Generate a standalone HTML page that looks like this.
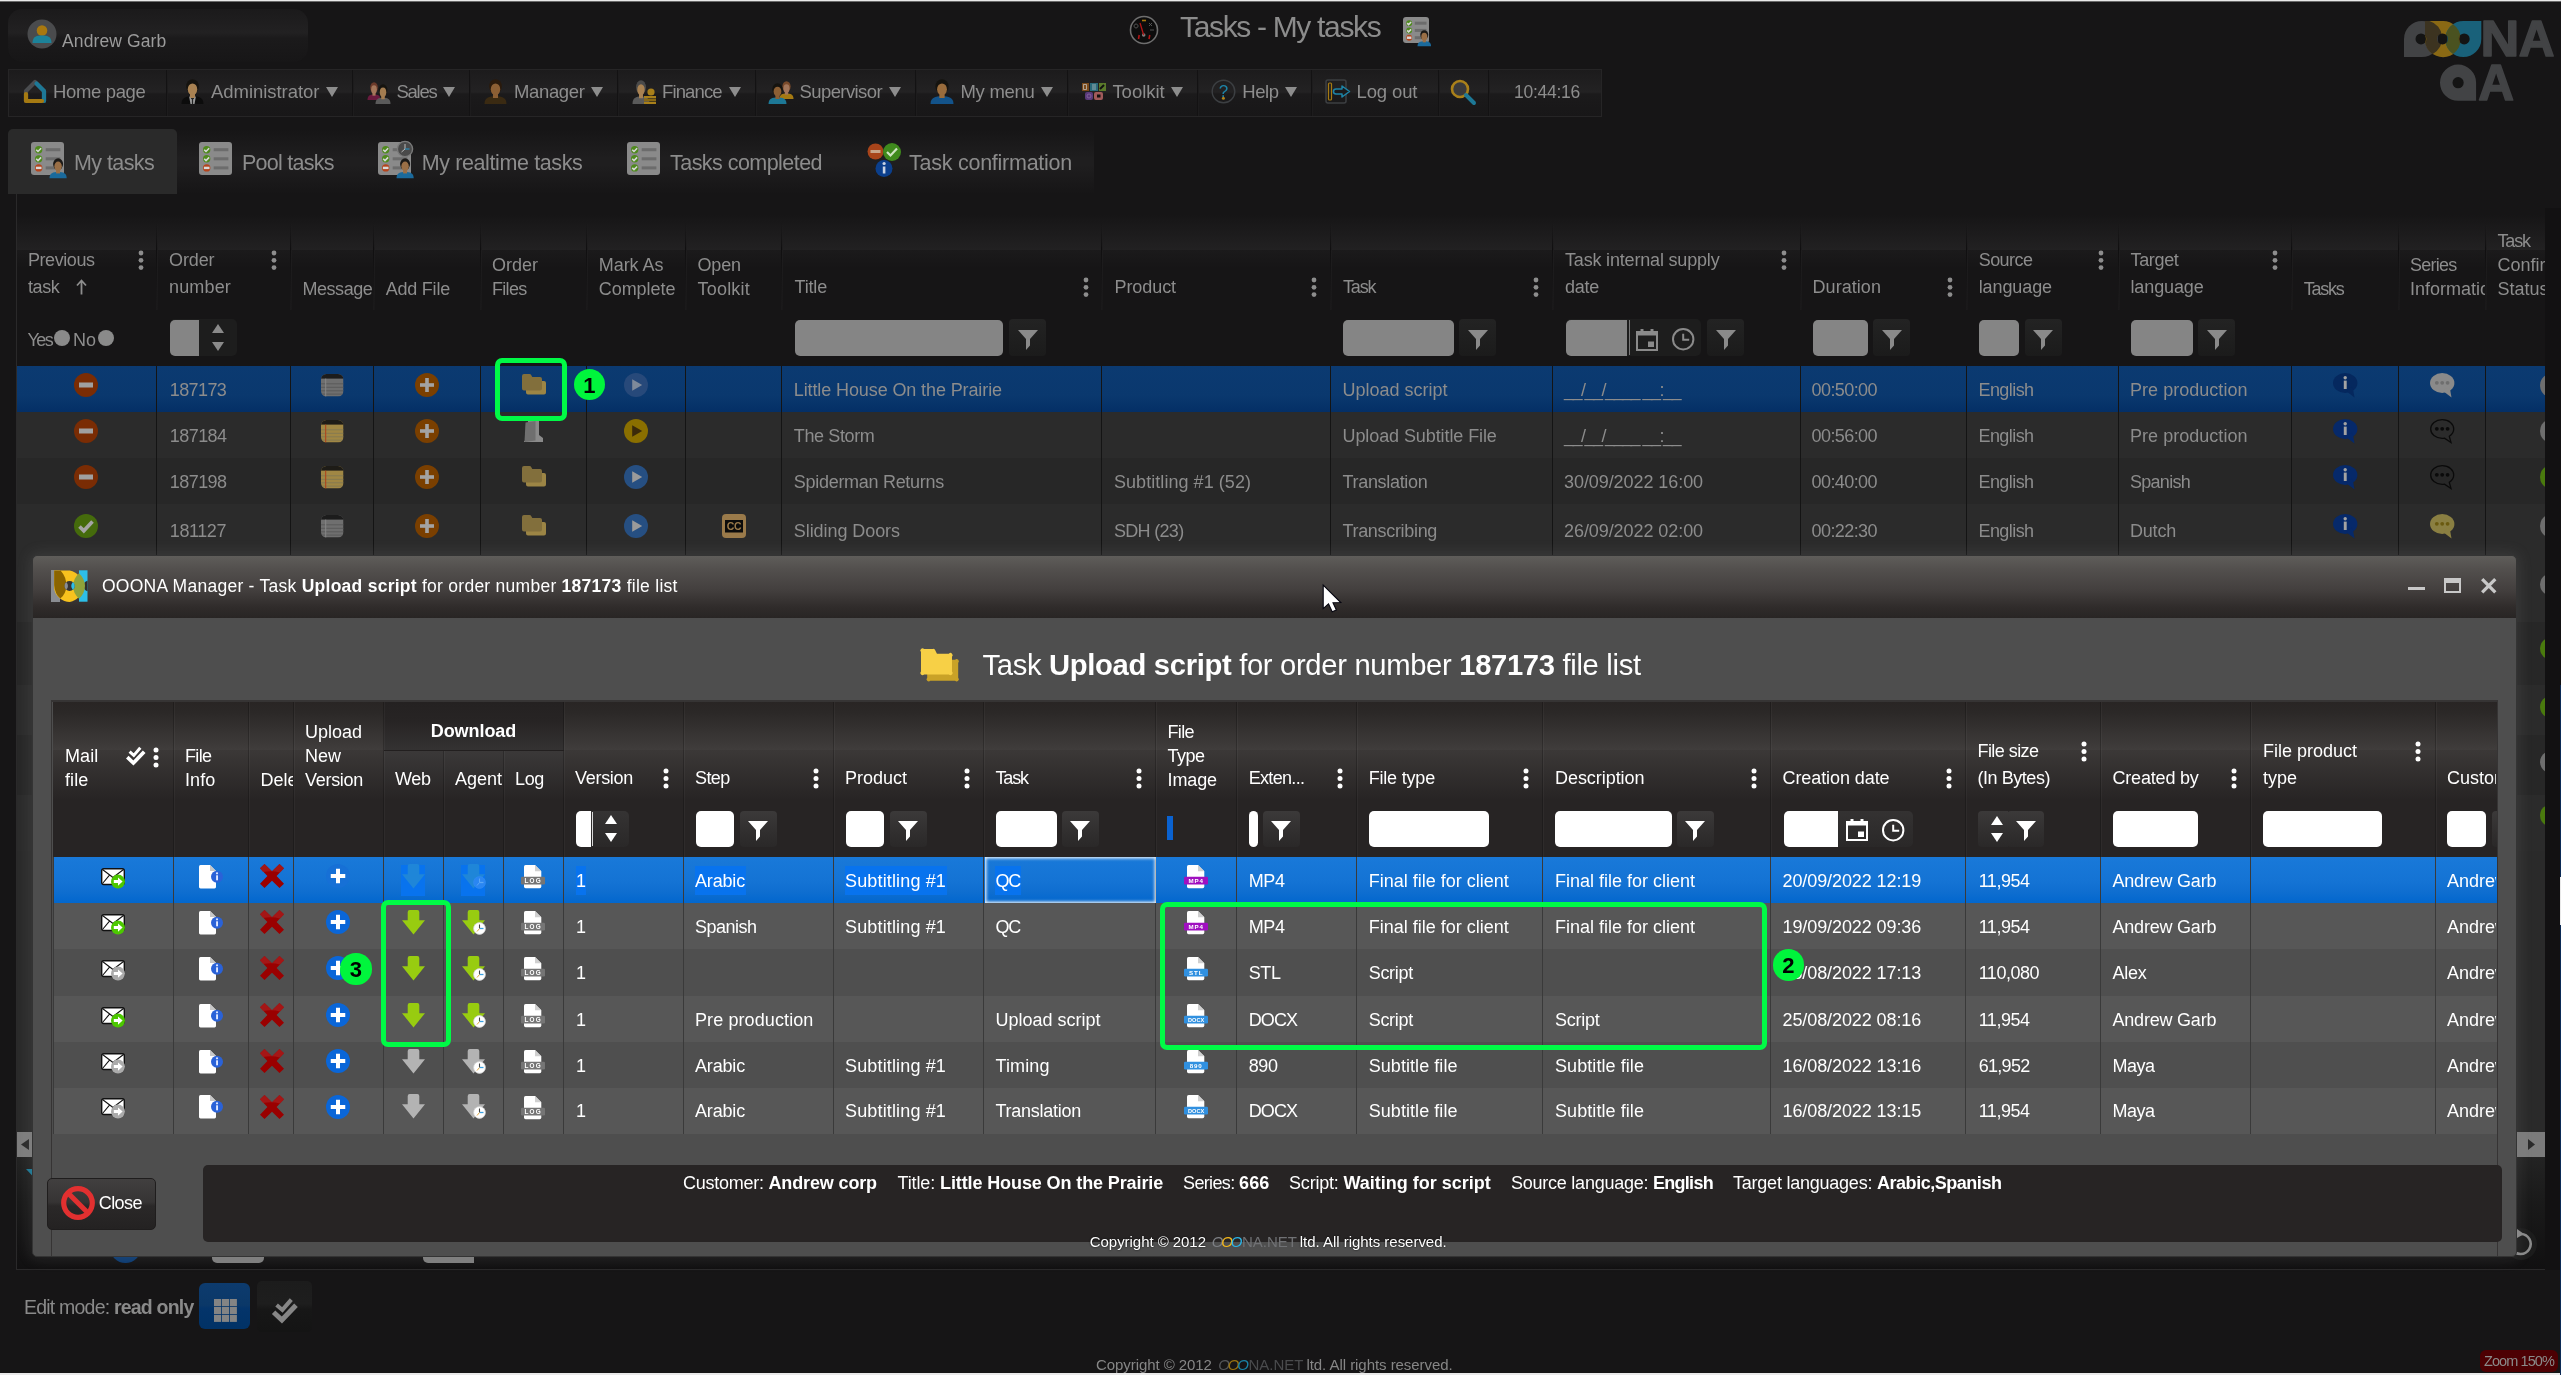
<!DOCTYPE html>
<html><head><meta charset="utf-8"><title>Tasks - My tasks</title><style>
html,body{margin:0;padding:0}
body{width:2561px;height:1375px;background:#161516;overflow:hidden;position:relative;font-family:'Liberation Sans',sans-serif}
body div,body svg{position:absolute;box-sizing:border-box}
body span{white-space:pre}
.t{white-space:pre}
svg{overflow:visible}
</style></head><body>
<div id="root" style="left:0;top:0;width:2561px;height:1375px;will-change:transform">
<div style="left:0px;top:0px;width:2561px;height:1px;background:#e9e9e9"></div>
<div style="left:0px;top:1px;width:2561px;height:1px;background:#6a6a6a"></div>
<div style="left:8px;top:9px;width:300px;height:53px;border-radius:14px;background:linear-gradient(#1b1a1b 0%,#222122 45%,#1b1a1b 55%,#171617 100%)"></div>
<svg style="left:27px;top:19px;" width="30" height="30" viewBox="0 0 30 30"><circle cx="15" cy="15" r="14.5" fill="#4a4b4d"/><circle cx="15" cy="11.5" r="5.3" fill="#a8780f"/><path d="M5.5 24 C5.5 17 10 16.5 15 16.5 C20 16.5 24.5 17 24.5 24 Z" fill="#1c8299"/></svg>
<div class="t" style="left:62px;top:29px;font-size:17.5px;line-height:24px;color:#9b9b9b;letter-spacing:0.11px;">Andrew Garb</div>
<svg style="left:1129px;top:15px;" width="30" height="30" viewBox="0 0 30 30"><circle cx="15" cy="15" r="13.5" fill="#0c0c0c" stroke="#6e6e6e" stroke-width="1.6"/><circle cx="14.7" cy="20" r="1.8" fill="#7d7d7d"/><path d="M14.7 20 L11 8" stroke="#b01616" stroke-width="1.3"/><path d="M9.5 24 l0.7 -4 M20 24 l0.8 -4" stroke="#b01616" stroke-width="1.6"/><path d="M7 9 a2 2 0 1 0 0.1 0 M20 8 l3 3 m0 -3 l-3 3 M21 15 h4" stroke="#5a5a5a" stroke-width="0.9" fill="none"/><path d="M13 5.5 h4" stroke="#a8780f" stroke-width="1.6"/></svg>
<div class="t" style="left:1180px;top:7px;font-size:30px;line-height:40px;color:#8c8c8c;letter-spacing:-1.33px;">Tasks - My tasks</div>
<svg style="left:1403px;top:17px;" width="28" height="28" viewBox="0 0 28 28"><rect x="0" y="0" width="26" height="26" rx="3" fill="#8a8a8a"/><circle cx="6.16" cy="6.16" r="2.94" fill="#4f8a1d"/><path d="M4.2 6.16 l1.4000000000000001 1.4000000000000001 l2.52 -2.52" stroke="#d8d8d8" stroke-width="1.6" fill="none"/><rect x="11.76" y="4.66" width="11.76" height="3" fill="#6c6c6c"/><circle cx="6.16" cy="13.44" r="2.94" fill="#4f8a1d"/><path d="M4.2 13.44 l1.4000000000000001 1.4000000000000001 l2.52 -2.52" stroke="#d8d8d8" stroke-width="1.6" fill="none"/><rect x="11.76" y="11.94" width="11.76" height="3" fill="#6c6c6c"/><circle cx="6.16" cy="20.72" r="2.94" fill="#b5441c"/><rect x="3.9200000000000004" y="19.52" width="4.48" height="2.4" fill="#d8d8d8"/><rect x="11.76" y="19.22" width="11.76" height="3" fill="#6c6c6c"/></svg>
<svg style="left:1417px;top:29.6px;" width="14.56" height="16.24" viewBox="0 0 14.56 16.24"><path d="M0.5 16.24 C0.5 12.017599999999998 3.2032000000000003 11.205599999999999 7.28 11.205599999999999 C11.356800000000002 11.205599999999999 14.06 12.017599999999998 14.06 16.24 Z" fill="#1a6a9c"/><rect x="5.678400000000001" y="8.444799999999999" width="3.2032000000000003" height="3.8975999999999993" fill="#9a6f46"/><ellipse cx="7.28" cy="4.871999999999999" rx="4.0040000000000004" ry="4.709599999999999" fill="#1c1a18"/><ellipse cx="7.28" cy="6.6583999999999985" rx="2.9848" ry="3.8163999999999993" fill="#9a6f46"/></svg>
<svg style="left:2402px;top:19px;" width="156" height="84" viewBox="0 0 156 84"><path d="M20 2 A18 18 0 0 1 20 38 H2 V20 A18 18 0 0 1 20 2 Z" fill="#424345"/><path d="M23 2 H40.8 A18.1 18.1 0 1 1 23 20.1 Z" fill="#8a6914"/><path d="M23 2 H27.5 A18 18 0 0 1 30.5 35.2 A18.1 18.1 0 0 1 23 20.1 Z" fill="#3c3320"/><path d="M61.3 2 H79.3 V20 A18 18 0 1 1 61.3 2 Z" fill="#19617a"/><path d="M51 5.2 A18 18 0 0 1 51 34.9 A18 18 0 0 1 51 5.2 Z" fill="#4a5220"/><circle cx="19" cy="19.9" r="5.5" fill="#141414"/><circle cx="40.5" cy="19.9" r="5.5" fill="#141414"/><circle cx="62.2" cy="19.9" r="5.5" fill="#141414"/><path d="M22.8 15.9 A5.5 5.5 0 0 1 22.8 23.9 A8 8 0 0 0 22.8 15.9Z" fill="#8a6914"/><path d="M36.6 16 A5.5 5.5 0 0 0 36.6 23.8 A8 8 0 0 1 36.6 16Z" fill="#55565a"/><path d="M44.4 16 A5.5 5.5 0 0 1 44.4 23.8 A8 8 0 0 0 44.4 16Z" fill="#19617a"/><path d="M58.3 16 A5.5 5.5 0 0 0 58.3 23.8 A8 8 0 0 1 58.3 16Z" fill="#8a6914"/><text transform="translate(82.20,37.4) scale(1.0686,1)" x="-3.36" y="0" font-family="Liberation Sans, sans-serif" font-weight="700" font-size="50.3" fill="#424345" stroke="#424345" stroke-width="1.6" stroke-linejoin="round">N</text><text transform="translate(118.00,37.4) scale(0.9838,1)" x="-1.25" y="0" font-family="Liberation Sans, sans-serif" font-weight="700" font-size="50.3" fill="#424345" stroke="#424345" stroke-width="1.6" stroke-linejoin="round">A</text><path d="M56.1 45.6 A18 18 0 0 1 74.1 63.7 V81.8 H56.1 A18.1 18.1 0 0 1 56.1 45.6 Z" fill="#424345"/><circle cx="56.1" cy="63.7" r="5.6" fill="#141414"/><text transform="translate(77.40,81) scale(0.9838,1)" x="-1.25" y="0" font-family="Liberation Sans, sans-serif" font-weight="700" font-size="50.3" fill="#424345" stroke="#424345" stroke-width="1.6" stroke-linejoin="round">A</text></svg>
<div style="left:8px;top:69px;width:1594px;height:48px;background:linear-gradient(#1c1b1c 0%,#232223 48%,#1b1a1b 52%,#181718 100%);border:1px solid #262526;box-sizing:border-box"></div>
<div style="left:166px;top:70px;width:2px;height:46px;background:#1d1c1d;border-left:1px solid #131213"></div>
<div style="left:352px;top:70px;width:2px;height:46px;background:#1d1c1d;border-left:1px solid #131213"></div>
<div style="left:469px;top:70px;width:2px;height:46px;background:#1d1c1d;border-left:1px solid #131213"></div>
<div style="left:617px;top:70px;width:2px;height:46px;background:#1d1c1d;border-left:1px solid #131213"></div>
<div style="left:755px;top:70px;width:2px;height:46px;background:#1d1c1d;border-left:1px solid #131213"></div>
<div style="left:915px;top:70px;width:2px;height:46px;background:#1d1c1d;border-left:1px solid #131213"></div>
<div style="left:1067px;top:70px;width:2px;height:46px;background:#1d1c1d;border-left:1px solid #131213"></div>
<div style="left:1197px;top:70px;width:2px;height:46px;background:#1d1c1d;border-left:1px solid #131213"></div>
<div style="left:1311px;top:70px;width:2px;height:46px;background:#1d1c1d;border-left:1px solid #131213"></div>
<div style="left:1438px;top:70px;width:2px;height:46px;background:#1d1c1d;border-left:1px solid #131213"></div>
<div style="left:1488px;top:70px;width:2px;height:46px;background:#1d1c1d;border-left:1px solid #131213"></div>
<svg style="left:22px;top:79px;" width="26" height="25" viewBox="0 0 26 25"><path d="M4 22 V12 L13 3 L22 12 V22" fill="none" stroke="#4a4c4f" stroke-width="4.2" stroke-linejoin="round" stroke-linecap="round"/><path d="M14.5 4.5 L22 12 V22" fill="none" stroke="#1d7896" stroke-width="4.2" stroke-linejoin="round" stroke-linecap="round"/><path d="M4 15 V22 H20" fill="none" stroke="#a57a12" stroke-width="4.2" stroke-linejoin="round" stroke-linecap="round"/></svg>
<div class="t" style="left:53px;top:79px;font-size:18.5px;line-height:26px;color:#8d8d8d;letter-spacing:-0.35px;">Home page</div>
<svg style="left:181px;top:79px;" width="23" height="25" viewBox="0 0 23 25"><path d="M0.5 25 C0.5 18.5 5.06 17.25 11.5 17.25 C17.94 17.25 22.5 18.5 22.5 25 Z" fill="#0c0c0c"/><rect x="8.97" y="13.0" width="5.06" height="6.0" fill="#a98252"/><ellipse cx="11.5" cy="7.5" rx="6.325" ry="7.249999999999999" fill="#15130f"/><ellipse cx="11.5" cy="10.25" rx="4.715" ry="5.875" fill="#a98252"/></svg>
<svg style="left:188px;top:96px;" width="9" height="8" viewBox="0 0 9 8"><path d="M1 0 L4.5 4 L8 0 L6.5 8 H2.5 Z" fill="#9a9a9a"/><path d="M4.5 2 V8" stroke="#222" stroke-width="1.2"/></svg>
<div class="t" style="left:211px;top:79px;font-size:18.5px;line-height:26px;color:#8d8d8d;letter-spacing:-0.04px;">Administrator</div>
<svg style="left:325.5px;top:86.5px;" width="12" height="10" viewBox="0 0 12 10"><path d="M0 0 H12 L6 10 Z" fill="#8d8d8d"/></svg>
<svg style="left:367px;top:82px;" width="14" height="18" viewBox="0 0 14 18"><path d="M0.5 18 C0.5 13.32 3.08 12.419999999999998 7.0 12.419999999999998 C10.92 12.419999999999998 13.5 13.32 13.5 18 Z" fill="#6a1a3e"/><rect x="5.46" y="9.36" width="3.08" height="4.32" fill="#a4765a"/><ellipse cx="7.0" cy="5.3999999999999995" rx="3.8500000000000005" ry="5.22" fill="#6b3a2a"/><ellipse cx="7.0" cy="7.38" rx="2.8699999999999997" ry="4.2299999999999995" fill="#a4765a"/></svg>
<svg style="left:375px;top:84px;" width="16" height="20" viewBox="0 0 16 20"><path d="M0.5 20 C0.5 14.8 3.52 13.799999999999999 8.0 13.799999999999999 C12.48 13.799999999999999 15.5 14.8 15.5 20 Z" fill="#5a5a5a"/><rect x="6.24" y="10.4" width="3.52" height="4.8" fill="#a37c50"/><ellipse cx="8.0" cy="6.0" rx="4.4" ry="5.8" fill="#15130f"/><ellipse cx="8.0" cy="8.2" rx="3.28" ry="4.699999999999999" fill="#a37c50"/></svg>
<div class="t" style="left:396.5px;top:79px;font-size:18.5px;line-height:26px;color:#8d8d8d;letter-spacing:-1.26px;">Sales</div>
<svg style="left:443px;top:86.5px;" width="12" height="10" viewBox="0 0 12 10"><path d="M0 0 H12 L6 10 Z" fill="#8d8d8d"/></svg>
<svg style="left:484px;top:79px;" width="23" height="25" viewBox="0 0 23 25"><path d="M0.5 25 C0.5 18.5 5.06 17.25 11.5 17.25 C17.94 17.25 22.5 18.5 22.5 25 Z" fill="#3a2a12"/><rect x="8.97" y="13.0" width="5.06" height="6.0" fill="#8c5f34"/><ellipse cx="11.5" cy="7.5" rx="6.325" ry="7.249999999999999" fill="#2a1a0c"/><ellipse cx="11.5" cy="10.25" rx="4.715" ry="5.875" fill="#8c5f34"/></svg>
<div class="t" style="left:514px;top:79px;font-size:18.5px;line-height:26px;color:#8d8d8d;letter-spacing:-0.36px;">Manager</div>
<svg style="left:591px;top:86.5px;" width="12" height="10" viewBox="0 0 12 10"><path d="M0 0 H12 L6 10 Z" fill="#8d8d8d"/></svg>
<svg style="left:632px;top:80px;" width="18" height="24" viewBox="0 0 18 24"><path d="M0.5 24 C0.5 17.759999999999998 3.96 16.56 9.0 16.56 C14.040000000000001 16.56 17.5 17.759999999999998 17.5 24 Z" fill="#5a5a5a"/><rect x="7.0200000000000005" y="12.48" width="3.96" height="5.76" fill="#a98252"/><ellipse cx="9.0" cy="7.199999999999999" rx="4.95" ry="6.959999999999999" fill="#4a4a4a"/><ellipse cx="9.0" cy="9.84" rx="3.69" ry="5.64" fill="#a98252"/></svg>
<svg style="left:643px;top:88px;" width="13" height="16" viewBox="0 0 13 16"><circle cx="8" cy="4" r="3.6" fill="#a9801a"/><rect x="1" y="8" width="12" height="2.4" fill="#a9801a"/><rect x="1" y="11" width="12" height="2.4" fill="#8a6914"/><rect x="1" y="14" width="12" height="2" fill="#a9801a"/></svg>
<div class="t" style="left:662px;top:79px;font-size:18.5px;line-height:26px;color:#8d8d8d;letter-spacing:-0.86px;">Finance</div>
<svg style="left:728.5px;top:86.5px;" width="12" height="10" viewBox="0 0 12 10"><path d="M0 0 H12 L6 10 Z" fill="#8d8d8d"/></svg>
<svg style="left:779px;top:81px;" width="15" height="18" viewBox="0 0 15 18"><path d="M0.5 18 C0.5 13.32 3.3 12.419999999999998 7.5 12.419999999999998 C11.700000000000001 12.419999999999998 14.5 13.32 14.5 18 Z" fill="#a57a12"/><rect x="5.8500000000000005" y="9.36" width="3.3" height="4.32" fill="#a4765a"/><ellipse cx="7.5" cy="5.3999999999999995" rx="4.125" ry="5.22" fill="#7a4a2a"/><ellipse cx="7.5" cy="7.38" rx="3.0749999999999997" ry="4.2299999999999995" fill="#a4765a"/></svg>
<svg style="left:768px;top:83px;" width="19" height="21" viewBox="0 0 19 21"><path d="M0.5 21 C0.5 15.54 4.18 14.489999999999998 9.5 14.489999999999998 C14.82 14.489999999999998 18.5 15.54 18.5 21 Z" fill="#1d7896"/><rect x="7.41" y="10.92" width="4.18" height="5.04" fill="#8c5f34"/><ellipse cx="9.5" cy="6.3" rx="5.2250000000000005" ry="6.09" fill="#15130f"/><ellipse cx="9.5" cy="8.61" rx="3.8949999999999996" ry="4.935" fill="#8c5f34"/></svg>
<div class="t" style="left:799.5px;top:79px;font-size:18.5px;line-height:26px;color:#8d8d8d;letter-spacing:-0.59px;">Supervisor</div>
<svg style="left:888.7px;top:86.5px;" width="12" height="10" viewBox="0 0 12 10"><path d="M0 0 H12 L6 10 Z" fill="#8d8d8d"/></svg>
<svg style="left:930px;top:79px;" width="24" height="25" viewBox="0 0 24 25"><path d="M0.5 25 C0.5 18.5 5.28 17.25 12.0 17.25 C18.72 17.25 23.5 18.5 23.5 25 Z" fill="#13538a"/><rect x="9.36" y="13.0" width="5.28" height="6.0" fill="#9a6c3c"/><ellipse cx="12.0" cy="7.5" rx="6.6000000000000005" ry="7.249999999999999" fill="#15130f"/><ellipse cx="12.0" cy="10.25" rx="4.92" ry="5.875" fill="#9a6c3c"/></svg>
<div class="t" style="left:960.5px;top:79px;font-size:18.5px;line-height:26px;color:#8d8d8d;letter-spacing:-0.30px;">My menu</div>
<svg style="left:1041px;top:86.5px;" width="12" height="10" viewBox="0 0 12 10"><path d="M0 0 H12 L6 10 Z" fill="#8d8d8d"/></svg>
<svg style="left:1082px;top:83px;" width="24" height="17" viewBox="0 0 24 17"><rect x="0" y="0" width="7" height="8" fill="#7a4a1a"/><rect x="8" y="0" width="8" height="8" fill="#2a6a7a"/><rect x="17" y="0" width="7" height="8" fill="#5a7a2a"/><rect x="3" y="9" width="8" height="8" rx="2" fill="#5a3a7a"/><rect x="12" y="9" width="9" height="8" rx="2" fill="#a05a5a"/><path d="M18 6 l4 -4" stroke="#111" stroke-width="2"/><rect x="15" y="11.5" width="3.5" height="3" fill="#111"/><circle cx="7" cy="13" r="2" fill="none" stroke="#8a6aa0" stroke-width="0.8"/><path d="M1.5 1.5 h3 v5 h-3z M10 2 h4 M10 4 h4 M10 6h4" stroke="#c9c9c9" stroke-width="0.7" fill="none"/></svg>
<div class="t" style="left:1112.4px;top:79px;font-size:18.5px;line-height:26px;color:#8d8d8d;letter-spacing:-0.02px;">Toolkit</div>
<svg style="left:1171px;top:86.5px;" width="12" height="10" viewBox="0 0 12 10"><path d="M0 0 H12 L6 10 Z" fill="#8d8d8d"/></svg>
<svg style="left:1211px;top:79px;" width="25" height="25" viewBox="0 0 25 25"><circle cx="12.5" cy="12.5" r="11.3" fill="none" stroke="#3c3f42" stroke-width="1.4"/><text x="12.5" y="18" text-anchor="middle" font-family="Liberation Sans, sans-serif" font-size="17" fill="#1d84a8">?</text><circle cx="12.4" cy="19.3" r="1.5" fill="#b0841a"/></svg>
<div class="t" style="left:1242.3px;top:79px;font-size:18.5px;line-height:26px;color:#8d8d8d;letter-spacing:-0.47px;">Help</div>
<svg style="left:1285px;top:86.5px;" width="12" height="10" viewBox="0 0 12 10"><path d="M0 0 H12 L6 10 Z" fill="#8d8d8d"/></svg>
<svg style="left:1325px;top:79px;" width="27" height="26" viewBox="0 0 27 26"><rect x="1" y="1" width="20" height="23" rx="2" fill="none" stroke="#3c3f42" stroke-width="1.5"/><rect x="3.5" y="4" width="3" height="17" rx="1" fill="none" stroke="#a57a12" stroke-width="1.2"/><path d="M11 10 H17 V7 L24.5 12.5 L17 18 V15 H11 A2.5 2.5 0 0 1 11 10 Z" fill="#1b1a1b" stroke="#1d84a8" stroke-width="1.5" stroke-linejoin="round"/></svg>
<div class="t" style="left:1356.5px;top:79px;font-size:18.5px;line-height:26px;color:#8d8d8d;letter-spacing:-0.12px;">Log out</div>
<svg style="left:1449px;top:78px;" width="29" height="28" viewBox="0 0 29 28"><circle cx="11" cy="11" r="8" fill="#3a3a3c" stroke="#a9801a" stroke-width="2.6"/><path d="M17 17 L25 25" stroke="#1d7896" stroke-width="4" stroke-linecap="round"/></svg>
<div class="t" style="left:1514px;top:80px;font-size:17.5px;line-height:24px;color:#8d8d8d;letter-spacing:-0.27px;">10:44:16</div>
<div style="left:8px;top:129px;width:1086px;height:65px;background:linear-gradient(#161516 0%,#1f1e1f 45%,#1f1e1f 55%,#161516 100%)"></div>
<div style="left:8px;top:129px;width:169px;height:65px;background:#2a2a2a;border-radius:5px 5px 0 0"></div>
<svg style="left:31px;top:142px;" width="35" height="35" viewBox="0 0 35 35"><rect x="0" y="0" width="33" height="33" rx="3" fill="#8a8a8a"/><circle cx="7.7" cy="7.7" r="3.675" fill="#4f8a1d"/><path d="M5.25 7.7 l1.75 1.75 l3.15 -3.15" stroke="#d8d8d8" stroke-width="1.6" fill="none"/><rect x="14.7" y="6.2" width="14.7" height="3" fill="#6c6c6c"/><circle cx="7.7" cy="16.8" r="3.675" fill="#4f8a1d"/><path d="M5.25 16.8 l1.75 1.75 l3.15 -3.15" stroke="#d8d8d8" stroke-width="1.6" fill="none"/><rect x="14.7" y="15.3" width="14.7" height="3" fill="#6c6c6c"/><circle cx="7.7" cy="25.9" r="3.675" fill="#b5441c"/><rect x="4.9" y="24.7" width="5.6000000000000005" height="2.4" fill="#d8d8d8"/><rect x="14.7" y="24.4" width="14.7" height="3" fill="#6c6c6c"/></svg>
<svg style="left:48.5px;top:157.75px;" width="18.2" height="20.3" viewBox="0 0 18.2 20.3"><path d="M0.5 20.299999999999997 C0.5 15.021999999999998 4.004 14.006999999999996 9.1 14.006999999999996 C14.196 14.006999999999996 17.7 15.021999999999998 17.7 20.299999999999997 Z" fill="#1a6a9c"/><rect x="7.098" y="10.556" width="4.004" height="4.871999999999999" fill="#9a6f46"/><ellipse cx="9.1" cy="6.089999999999999" rx="5.005" ry="5.886999999999999" fill="#1c1a18"/><ellipse cx="9.1" cy="8.322999999999999" rx="3.7309999999999994" ry="4.770499999999999" fill="#9a6f46"/></svg>
<div class="t" style="left:74px;top:148px;font-size:21.5px;line-height:30px;color:#8c8c8c;letter-spacing:-0.58px;">My tasks</div>
<svg style="left:199px;top:142px;" width="35" height="35" viewBox="0 0 35 35"><rect x="0" y="0" width="33" height="33" rx="3" fill="#8a8a8a"/><circle cx="7.7" cy="7.7" r="3.675" fill="#4f8a1d"/><path d="M5.25 7.7 l1.75 1.75 l3.15 -3.15" stroke="#d8d8d8" stroke-width="1.6" fill="none"/><rect x="14.7" y="6.2" width="14.7" height="3" fill="#6c6c6c"/><circle cx="7.7" cy="16.8" r="3.675" fill="#4f8a1d"/><path d="M5.25 16.8 l1.75 1.75 l3.15 -3.15" stroke="#d8d8d8" stroke-width="1.6" fill="none"/><rect x="14.7" y="15.3" width="14.7" height="3" fill="#6c6c6c"/><circle cx="7.7" cy="25.9" r="3.675" fill="#b5441c"/><rect x="4.9" y="24.7" width="5.6000000000000005" height="2.4" fill="#d8d8d8"/><rect x="14.7" y="24.4" width="14.7" height="3" fill="#6c6c6c"/></svg>
<div class="t" style="left:242px;top:148px;font-size:21.5px;line-height:30px;color:#8c8c8c;letter-spacing:-0.74px;">Pool tasks</div>
<svg style="left:378px;top:142px;" width="35" height="35" viewBox="0 0 35 35"><rect x="0" y="0" width="33" height="33" rx="3" fill="#8a8a8a"/><circle cx="7.7" cy="7.7" r="3.675" fill="#4f8a1d"/><path d="M5.25 7.7 l1.75 1.75 l3.15 -3.15" stroke="#d8d8d8" stroke-width="1.6" fill="none"/><rect x="14.7" y="6.2" width="14.7" height="3" fill="#6c6c6c"/><circle cx="7.7" cy="16.8" r="3.675" fill="#4f8a1d"/><path d="M5.25 16.8 l1.75 1.75 l3.15 -3.15" stroke="#d8d8d8" stroke-width="1.6" fill="none"/><rect x="14.7" y="15.3" width="14.7" height="3" fill="#6c6c6c"/><circle cx="7.7" cy="25.9" r="3.675" fill="#b5441c"/><rect x="4.9" y="24.7" width="5.6000000000000005" height="2.4" fill="#d8d8d8"/><rect x="14.7" y="24.4" width="14.7" height="3" fill="#6c6c6c"/></svg>
<svg style="left:395.5px;top:157.75px;" width="18.2" height="20.3" viewBox="0 0 18.2 20.3"><path d="M0.5 20.299999999999997 C0.5 15.021999999999998 4.004 14.006999999999996 9.1 14.006999999999996 C14.196 14.006999999999996 17.7 15.021999999999998 17.7 20.299999999999997 Z" fill="#1a6a9c"/><rect x="7.098" y="10.556" width="4.004" height="4.871999999999999" fill="#9a6f46"/><ellipse cx="9.1" cy="6.089999999999999" rx="5.005" ry="5.886999999999999" fill="#1c1a18"/><ellipse cx="9.1" cy="8.322999999999999" rx="3.7309999999999994" ry="4.770499999999999" fill="#9a6f46"/></svg>
<svg style="left:396px;top:140px;" width="18" height="18" viewBox="0 0 18 18"><circle cx="9" cy="9" r="7.6" fill="#4a4a4a" stroke="#7a7a7a" stroke-width="1.4"/><path d="M9 4 V9 L5.5 12" stroke="#b9b9b9" stroke-width="1" fill="none"/><path d="M9 9 H13.5" stroke="#2a8ab8" stroke-width="1.2"/></svg>
<div class="t" style="left:421.7px;top:148px;font-size:21.5px;line-height:30px;color:#8c8c8c;letter-spacing:-0.38px;">My realtime tasks</div>
<svg style="left:627px;top:142px;" width="35" height="35" viewBox="0 0 35 35"><rect x="0" y="0" width="33" height="33" rx="3" fill="#8a8a8a"/><circle cx="7.7" cy="7.7" r="3.675" fill="#4f8a1d"/><path d="M5.25 7.7 l1.75 1.75 l3.15 -3.15" stroke="#d8d8d8" stroke-width="1.6" fill="none"/><rect x="14.7" y="6.2" width="14.7" height="3" fill="#6c6c6c"/><circle cx="7.7" cy="16.8" r="3.675" fill="#4f8a1d"/><path d="M5.25 16.8 l1.75 1.75 l3.15 -3.15" stroke="#d8d8d8" stroke-width="1.6" fill="none"/><rect x="14.7" y="15.3" width="14.7" height="3" fill="#6c6c6c"/><circle cx="7.7" cy="25.9" r="3.675" fill="#4f8a1d"/><path d="M5.25 25.9 l1.75 1.75 l3.15 -3.15" stroke="#d8d8d8" stroke-width="1.6" fill="none"/><rect x="14.7" y="24.4" width="14.7" height="3" fill="#6c6c6c"/></svg>
<div class="t" style="left:670px;top:148px;font-size:21.5px;line-height:30px;color:#8c8c8c;letter-spacing:-0.54px;">Tasks completed</div>
<svg style="left:866px;top:142px;" width="38" height="36" viewBox="0 0 38 36"><circle cx="9.5" cy="9.5" r="8" fill="#a8441a"/><rect x="4.5" y="8" width="10" height="3" fill="#c9a58a"/><circle cx="26" cy="10" r="9" fill="#3f8a1d"/><path d="M21 10 l3.5 3.5 l6.5 -7" stroke="#cfe3c3" stroke-width="2.2" fill="none"/><circle cx="18" cy="26.5" r="8.5" fill="#0b3f8c"/><rect x="16.8" y="24.5" width="2.6" height="7" fill="#c9d3e3"/><circle cx="18.1" cy="21.5" r="1.6" fill="#c9d3e3"/></svg>
<div class="t" style="left:909px;top:148px;font-size:21.5px;line-height:30px;color:#8c8c8c;letter-spacing:-0.25px;">Task confirmation</div>
<div style="left:16px;top:194px;width:2529px;height:1076px;background:#161516;border-left:1px solid #2a292a"></div>
<div style="left:17px;top:208px;width:2528px;height:42px;background:linear-gradient(#161516 0%,#161516 15%,#222122 100%)"></div>
<div style="left:17px;top:250px;width:2528px;height:18px;background:linear-gradient(#1b1a1b,#161516)"></div>
<div style="left:156px;top:222px;width:1px;height:88px;background:linear-gradient(rgba(30,29,30,.0),#100f10 30%,#1b1a1b 100%)"></div>
<div style="left:157px;top:222px;width:1px;height:88px;background:linear-gradient(rgba(30,29,30,.0),#1e1d1e 30%,#191819 100%)"></div>
<div style="left:290px;top:222px;width:1px;height:88px;background:linear-gradient(rgba(30,29,30,.0),#100f10 30%,#1b1a1b 100%)"></div>
<div style="left:291px;top:222px;width:1px;height:88px;background:linear-gradient(rgba(30,29,30,.0),#1e1d1e 30%,#191819 100%)"></div>
<div style="left:373px;top:222px;width:1px;height:88px;background:linear-gradient(rgba(30,29,30,.0),#100f10 30%,#1b1a1b 100%)"></div>
<div style="left:374px;top:222px;width:1px;height:88px;background:linear-gradient(rgba(30,29,30,.0),#1e1d1e 30%,#191819 100%)"></div>
<div style="left:480px;top:222px;width:1px;height:88px;background:linear-gradient(rgba(30,29,30,.0),#100f10 30%,#1b1a1b 100%)"></div>
<div style="left:481px;top:222px;width:1px;height:88px;background:linear-gradient(rgba(30,29,30,.0),#1e1d1e 30%,#191819 100%)"></div>
<div style="left:586px;top:222px;width:1px;height:88px;background:linear-gradient(rgba(30,29,30,.0),#100f10 30%,#1b1a1b 100%)"></div>
<div style="left:587px;top:222px;width:1px;height:88px;background:linear-gradient(rgba(30,29,30,.0),#1e1d1e 30%,#191819 100%)"></div>
<div style="left:685px;top:222px;width:1px;height:88px;background:linear-gradient(rgba(30,29,30,.0),#100f10 30%,#1b1a1b 100%)"></div>
<div style="left:686px;top:222px;width:1px;height:88px;background:linear-gradient(rgba(30,29,30,.0),#1e1d1e 30%,#191819 100%)"></div>
<div style="left:781px;top:222px;width:1px;height:88px;background:linear-gradient(rgba(30,29,30,.0),#100f10 30%,#1b1a1b 100%)"></div>
<div style="left:782px;top:222px;width:1px;height:88px;background:linear-gradient(rgba(30,29,30,.0),#1e1d1e 30%,#191819 100%)"></div>
<div style="left:1101px;top:222px;width:1px;height:88px;background:linear-gradient(rgba(30,29,30,.0),#100f10 30%,#1b1a1b 100%)"></div>
<div style="left:1102px;top:222px;width:1px;height:88px;background:linear-gradient(rgba(30,29,30,.0),#1e1d1e 30%,#191819 100%)"></div>
<div style="left:1330px;top:222px;width:1px;height:88px;background:linear-gradient(rgba(30,29,30,.0),#100f10 30%,#1b1a1b 100%)"></div>
<div style="left:1331px;top:222px;width:1px;height:88px;background:linear-gradient(rgba(30,29,30,.0),#1e1d1e 30%,#191819 100%)"></div>
<div style="left:1552px;top:222px;width:1px;height:88px;background:linear-gradient(rgba(30,29,30,.0),#100f10 30%,#1b1a1b 100%)"></div>
<div style="left:1553px;top:222px;width:1px;height:88px;background:linear-gradient(rgba(30,29,30,.0),#1e1d1e 30%,#191819 100%)"></div>
<div style="left:1800px;top:222px;width:1px;height:88px;background:linear-gradient(rgba(30,29,30,.0),#100f10 30%,#1b1a1b 100%)"></div>
<div style="left:1801px;top:222px;width:1px;height:88px;background:linear-gradient(rgba(30,29,30,.0),#1e1d1e 30%,#191819 100%)"></div>
<div style="left:1966px;top:222px;width:1px;height:88px;background:linear-gradient(rgba(30,29,30,.0),#100f10 30%,#1b1a1b 100%)"></div>
<div style="left:1967px;top:222px;width:1px;height:88px;background:linear-gradient(rgba(30,29,30,.0),#1e1d1e 30%,#191819 100%)"></div>
<div style="left:2118px;top:222px;width:1px;height:88px;background:linear-gradient(rgba(30,29,30,.0),#100f10 30%,#1b1a1b 100%)"></div>
<div style="left:2119px;top:222px;width:1px;height:88px;background:linear-gradient(rgba(30,29,30,.0),#1e1d1e 30%,#191819 100%)"></div>
<div style="left:2291px;top:222px;width:1px;height:88px;background:linear-gradient(rgba(30,29,30,.0),#100f10 30%,#1b1a1b 100%)"></div>
<div style="left:2292px;top:222px;width:1px;height:88px;background:linear-gradient(rgba(30,29,30,.0),#1e1d1e 30%,#191819 100%)"></div>
<div style="left:2398px;top:222px;width:1px;height:88px;background:linear-gradient(rgba(30,29,30,.0),#100f10 30%,#1b1a1b 100%)"></div>
<div style="left:2399px;top:222px;width:1px;height:88px;background:linear-gradient(rgba(30,29,30,.0),#1e1d1e 30%,#191819 100%)"></div>
<div style="left:2485px;top:222px;width:1px;height:88px;background:linear-gradient(rgba(30,29,30,.0),#100f10 30%,#1b1a1b 100%)"></div>
<div style="left:2486px;top:222px;width:1px;height:88px;background:linear-gradient(rgba(30,29,30,.0),#1e1d1e 30%,#191819 100%)"></div>
<div class="t" style="left:28px;top:248px;font-size:18px;line-height:25px;color:#8d8d8d;letter-spacing:-0.44px;">Previous</div>
<div class="t" style="left:28px;top:275px;font-size:18px;line-height:25px;color:#8d8d8d;letter-spacing:-0.38px;">task</div>
<svg style="left:137.5px;top:250px;" width="6" height="20.6" viewBox="0 0 6 20.6"><circle cx="3" cy="3.0" r="2.4" fill="#8d8d8d"/><circle cx="3" cy="10.3" r="2.4" fill="#8d8d8d"/><circle cx="3" cy="17.6" r="2.4" fill="#8d8d8d"/></svg>
<svg style="left:76px;top:279px;" width="11" height="16" viewBox="0 0 11 16"><path d="M5.5 15.5 V2 M1 6.5 L5.5 1.5 L10 6.5" stroke="#8d8d8d" stroke-width="1.8" fill="none"/></svg>
<div class="t" style="left:169px;top:248px;font-size:18px;line-height:25px;color:#8d8d8d;letter-spacing:-0.10px;">Order</div>
<div class="t" style="left:169px;top:275px;font-size:18px;line-height:25px;color:#8d8d8d;letter-spacing:0.16px;">number</div>
<svg style="left:270.7px;top:250px;" width="6" height="20.6" viewBox="0 0 6 20.6"><circle cx="3" cy="3.0" r="2.4" fill="#8d8d8d"/><circle cx="3" cy="10.3" r="2.4" fill="#8d8d8d"/><circle cx="3" cy="17.6" r="2.4" fill="#8d8d8d"/></svg>
<div class="t" style="left:302.5px;top:277px;font-size:18px;line-height:25px;color:#8d8d8d;letter-spacing:-0.46px;">Message</div>
<div class="t" style="left:385.7px;top:277px;font-size:18px;line-height:25px;color:#8d8d8d;letter-spacing:-0.22px;">Add File</div>
<div class="t" style="left:492px;top:253px;font-size:18px;line-height:25px;color:#8d8d8d;">Order</div>
<div class="t" style="left:492px;top:277px;font-size:18px;line-height:25px;color:#8d8d8d;letter-spacing:-0.70px;">Files</div>
<div class="t" style="left:598.7px;top:253px;font-size:18px;line-height:25px;color:#8d8d8d;letter-spacing:-0.03px;">Mark As</div>
<div class="t" style="left:598.7px;top:277px;font-size:18px;line-height:25px;color:#8d8d8d;letter-spacing:-0.03px;">Complete</div>
<div class="t" style="left:697.5px;top:253px;font-size:18px;line-height:25px;color:#8d8d8d;letter-spacing:-0.14px;">Open</div>
<div class="t" style="left:697.5px;top:277px;font-size:18px;line-height:25px;color:#8d8d8d;letter-spacing:0.21px;">Toolkit</div>
<div class="t" style="left:794.5px;top:275px;font-size:18px;line-height:25px;color:#8d8d8d;letter-spacing:-0.17px;">Title</div>
<svg style="left:1082.5px;top:277.2px;" width="6" height="20.6" viewBox="0 0 6 20.6"><circle cx="3" cy="3.0" r="2.4" fill="#8d8d8d"/><circle cx="3" cy="10.3" r="2.4" fill="#8d8d8d"/><circle cx="3" cy="17.6" r="2.4" fill="#8d8d8d"/></svg>
<div class="t" style="left:1114.5px;top:275px;font-size:18px;line-height:25px;color:#8d8d8d;letter-spacing:-0.08px;">Product</div>
<svg style="left:1310.5px;top:277.2px;" width="6" height="20.6" viewBox="0 0 6 20.6"><circle cx="3" cy="3.0" r="2.4" fill="#8d8d8d"/><circle cx="3" cy="10.3" r="2.4" fill="#8d8d8d"/><circle cx="3" cy="17.6" r="2.4" fill="#8d8d8d"/></svg>
<div class="t" style="left:1343px;top:275px;font-size:18px;line-height:25px;color:#8d8d8d;letter-spacing:-1.13px;">Task</div>
<svg style="left:1532.7px;top:277.2px;" width="6" height="20.6" viewBox="0 0 6 20.6"><circle cx="3" cy="3.0" r="2.4" fill="#8d8d8d"/><circle cx="3" cy="10.3" r="2.4" fill="#8d8d8d"/><circle cx="3" cy="17.6" r="2.4" fill="#8d8d8d"/></svg>
<div class="t" style="left:1565px;top:248px;font-size:18px;line-height:25px;color:#8d8d8d;letter-spacing:-0.18px;">Task internal supply</div>
<div class="t" style="left:1565px;top:275px;font-size:18px;line-height:25px;color:#8d8d8d;letter-spacing:-0.26px;">date</div>
<svg style="left:1780.7px;top:250px;" width="6" height="20.6" viewBox="0 0 6 20.6"><circle cx="3" cy="3.0" r="2.4" fill="#8d8d8d"/><circle cx="3" cy="10.3" r="2.4" fill="#8d8d8d"/><circle cx="3" cy="17.6" r="2.4" fill="#8d8d8d"/></svg>
<div class="t" style="left:1812.5px;top:275px;font-size:18px;line-height:25px;color:#8d8d8d;letter-spacing:0.06px;">Duration</div>
<svg style="left:1946.7px;top:277.2px;" width="6" height="20.6" viewBox="0 0 6 20.6"><circle cx="3" cy="3.0" r="2.4" fill="#8d8d8d"/><circle cx="3" cy="10.3" r="2.4" fill="#8d8d8d"/><circle cx="3" cy="17.6" r="2.4" fill="#8d8d8d"/></svg>
<div class="t" style="left:1978.7px;top:248px;font-size:18px;line-height:25px;color:#8d8d8d;letter-spacing:-0.54px;">Source</div>
<div class="t" style="left:1978.7px;top:275px;font-size:18px;line-height:25px;color:#8d8d8d;letter-spacing:-0.10px;">language</div>
<svg style="left:2098.2px;top:250px;" width="6" height="20.6" viewBox="0 0 6 20.6"><circle cx="3" cy="3.0" r="2.4" fill="#8d8d8d"/><circle cx="3" cy="10.3" r="2.4" fill="#8d8d8d"/><circle cx="3" cy="17.6" r="2.4" fill="#8d8d8d"/></svg>
<div class="t" style="left:2130.5px;top:248px;font-size:18px;line-height:25px;color:#8d8d8d;letter-spacing:-0.34px;">Target</div>
<div class="t" style="left:2130.5px;top:275px;font-size:18px;line-height:25px;color:#8d8d8d;letter-spacing:-0.13px;">language</div>
<svg style="left:2271.7px;top:250px;" width="6" height="20.6" viewBox="0 0 6 20.6"><circle cx="3" cy="3.0" r="2.4" fill="#8d8d8d"/><circle cx="3" cy="10.3" r="2.4" fill="#8d8d8d"/><circle cx="3" cy="17.6" r="2.4" fill="#8d8d8d"/></svg>
<div class="t" style="left:2303.7px;top:277px;font-size:18px;line-height:25px;color:#8d8d8d;letter-spacing:-1.24px;">Tasks</div>
<div class="t" style="left:2410px;top:253px;font-size:18px;line-height:25px;color:#8d8d8d;letter-spacing:-0.76px;">Series</div>
<div class="t" style="left:2410px;top:277px;font-size:18px;line-height:25px;color:#8d8d8d;width:75px;overflow:hidden">Information</div>
<div class="t" style="left:2497.5px;top:229px;font-size:18px;line-height:25px;color:#8d8d8d;letter-spacing:-1.13px;">Task</div>
<div class="t" style="left:2497.5px;top:253px;font-size:18px;line-height:25px;color:#8d8d8d;width:47px;overflow:hidden">Confirmation</div>
<div class="t" style="left:2497.5px;top:277px;font-size:18px;line-height:25px;color:#8d8d8d;width:47px;overflow:hidden">Status</div>
<div class="t" style="left:27.5px;top:328px;font-size:18px;line-height:25px;color:#8d8d8d;letter-spacing:-1.50px;">Yes</div>
<svg style="left:54px;top:330px;" width="16" height="16" viewBox="0 0 16 16"><circle cx="8" cy="8" r="8" fill="#8a8a8a"/></svg>
<div class="t" style="left:73px;top:328px;font-size:18px;line-height:25px;color:#8d8d8d;">No</div>
<svg style="left:98px;top:330px;" width="16" height="16" viewBox="0 0 16 16"><circle cx="8" cy="8" r="8" fill="#8a8a8a"/></svg>
<div style="left:170px;top:319px;width:67px;height:37px;border-radius:5px;background:#1d1d1d"></div>
<div style="left:170px;top:320px;width:29px;height:36px;background:#858585;border-radius:5px 0 0 5px"></div>
<svg style="left:212px;top:324px;" width="12" height="9" viewBox="0 0 12 9"><path d="M0 9 L6 0 L12 9 Z" fill="#8a8a8a"/></svg>
<svg style="left:212px;top:341.5px;" width="12" height="9" viewBox="0 0 12 9"><path d="M0 0 L6 9 L12 0 Z" fill="#8a8a8a"/></svg>
<div style="left:795px;top:320px;width:208px;height:36px;background:#858585;border-radius:5px"></div>
<div style="left:1009px;top:319px;width:37px;height:37px;border-radius:4px;background:linear-gradient(#232323,#1b1b1b)"></div>
<svg style="left:1017.5px;top:330px;" width="20" height="20" viewBox="0 0 20 20"><path d="M0 0 H20 L12.0 9.0 V15.600000000000001 L8.0 20 V9.0 Z" fill="#8a8a8a"/></svg>
<div style="left:1343px;top:320px;width:111.29999999999995px;height:36px;background:#858585;border-radius:5px"></div>
<div style="left:1459.3px;top:319px;width:37px;height:37px;border-radius:4px;background:linear-gradient(#232323,#1b1b1b)"></div>
<svg style="left:1467.8px;top:330px;" width="20" height="20" viewBox="0 0 20 20"><path d="M0 0 H20 L12.0 9.0 V15.600000000000001 L8.0 20 V9.0 Z" fill="#8a8a8a"/></svg>
<div style="left:1566.3px;top:319px;width:135px;height:37px;border-radius:5px;background:#1d1d1d"></div>
<div style="left:1566.3px;top:320px;width:61.200000000000045px;height:36px;background:#858585;border-radius:5px 0 0 5px"></div>
<div style="left:1628.5px;top:320px;width:1px;height:35px;background:#777"></div>
<svg style="left:1636.3px;top:328.5px;" width="22" height="22" viewBox="0 0 22 22"><path d="M1 3.0 H21.0 V21.0 H1 Z" fill="none" stroke="#8a8a8a" stroke-width="2.0"/><rect x="1" y="3.0" width="20.0" height="3.5" fill="#8a8a8a"/><rect x="4.5" y="0" width="3.0" height="4.5" fill="#8a8a8a"/><rect x="14.5" y="0" width="3.0" height="4.5" fill="#8a8a8a"/><rect x="12.0" y="12.5" width="6.0" height="5.5" fill="#8a8a8a"/></svg>
<svg style="left:1671.8px;top:328.3px;" width="22.4" height="22.4" viewBox="0 0 22.4 22.4"><circle cx="11.2" cy="11.2" r="10.2" fill="none" stroke="#8a8a8a" stroke-width="2"/><path d="M11.2 5.699999999999999 V11.7 H17.2" stroke="#8a8a8a" stroke-width="2" fill="none"/></svg>
<div style="left:1707px;top:319px;width:37px;height:37px;border-radius:4px;background:linear-gradient(#232323,#1b1b1b)"></div>
<svg style="left:1715.5px;top:330px;" width="20" height="20" viewBox="0 0 20 20"><path d="M0 0 H20 L12.0 9.0 V15.600000000000001 L8.0 20 V9.0 Z" fill="#8a8a8a"/></svg>
<div style="left:1813px;top:320px;width:55px;height:36px;background:#858585;border-radius:5px"></div>
<div style="left:1873px;top:319px;width:37px;height:37px;border-radius:4px;background:linear-gradient(#232323,#1b1b1b)"></div>
<svg style="left:1881.5px;top:330px;" width="20" height="20" viewBox="0 0 20 20"><path d="M0 0 H20 L12.0 9.0 V15.600000000000001 L8.0 20 V9.0 Z" fill="#8a8a8a"/></svg>
<div style="left:1979px;top:320px;width:40px;height:36px;background:#858585;border-radius:5px"></div>
<div style="left:2024.7px;top:319px;width:37px;height:37px;border-radius:4px;background:linear-gradient(#232323,#1b1b1b)"></div>
<svg style="left:2033.2px;top:330px;" width="20" height="20" viewBox="0 0 20 20"><path d="M0 0 H20 L12.0 9.0 V15.600000000000001 L8.0 20 V9.0 Z" fill="#8a8a8a"/></svg>
<div style="left:2131px;top:320px;width:62px;height:36px;background:#858585;border-radius:5px"></div>
<div style="left:2198px;top:319px;width:37px;height:37px;border-radius:4px;background:linear-gradient(#232323,#1b1b1b)"></div>
<svg style="left:2206.5px;top:330px;" width="20" height="20" viewBox="0 0 20 20"><path d="M0 0 H20 L12.0 9.0 V15.600000000000001 L8.0 20 V9.0 Z" fill="#8a8a8a"/></svg>
<div style="left:17px;top:366px;width:2528px;height:46px;background:linear-gradient(#0b3a71 0%,#0a386e 65%,#042f66 100%)"></div>
<div style="left:17px;top:412px;width:2528px;height:46px;background:#2b2b2b"></div>
<div style="left:17px;top:458px;width:2528px;height:46px;background:#272727"></div>
<div style="left:17px;top:504px;width:2528px;height:58px;background:#2b2b2b"></div>
<div style="left:17px;top:562px;width:2528px;height:60px;background:#2b2b2b"></div>
<div style="left:17px;top:622px;width:2528px;height:62.5px;background:#272727"></div>
<div style="left:17px;top:684.5px;width:2528px;height:50.5px;background:#2b2b2b"></div>
<div style="left:17px;top:735px;width:2528px;height:59.5px;background:#272727"></div>
<div style="left:17px;top:794.5px;width:2528px;height:56.5px;background:#2b2b2b"></div>
<div style="left:17px;top:851px;width:2528px;height:281px;background:#2a2a2a"></div>
<div style="left:156px;top:366px;width:1px;height:190px;background:#141414"></div>
<div style="left:290px;top:366px;width:1px;height:190px;background:#141414"></div>
<div style="left:373px;top:366px;width:1px;height:190px;background:#141414"></div>
<div style="left:480px;top:366px;width:1px;height:190px;background:#141414"></div>
<div style="left:586px;top:366px;width:1px;height:190px;background:#141414"></div>
<div style="left:685px;top:366px;width:1px;height:190px;background:#141414"></div>
<div style="left:781px;top:366px;width:1px;height:190px;background:#141414"></div>
<div style="left:1101px;top:366px;width:1px;height:190px;background:#141414"></div>
<div style="left:1330px;top:366px;width:1px;height:190px;background:#141414"></div>
<div style="left:1552px;top:366px;width:1px;height:190px;background:#141414"></div>
<div style="left:1800px;top:366px;width:1px;height:190px;background:#141414"></div>
<div style="left:1966px;top:366px;width:1px;height:190px;background:#141414"></div>
<div style="left:2118px;top:366px;width:1px;height:190px;background:#141414"></div>
<div style="left:2291px;top:366px;width:1px;height:190px;background:#141414"></div>
<div style="left:2398px;top:366px;width:1px;height:190px;background:#141414"></div>
<div style="left:2485px;top:366px;width:1px;height:190px;background:#141414"></div>
<svg style="left:74px;top:373px;" width="24" height="24" viewBox="0 0 24 24"><circle cx="12" cy="12" r="12" fill="#7a2c04"/><rect x="5" y="9.5" width="14" height="5" fill="#a0a0a0"/></svg>
<div class="t" style="left:169.8px;top:378px;font-size:18px;line-height:25px;color:#8c8c8c;letter-spacing:-0.61px;">187173</div>
<svg style="left:320.75px;top:373.75px;" width="22.5" height="22.5" viewBox="0 0 22.5 22.5"><clipPath id="np332_385"><rect x="0" y="0" width="22.5" height="22.5" rx="5.5"/></clipPath><g clip-path="url(#np332_385)"><rect width="22.5" height="22.5" fill="#6f6f6f"/><rect width="22.5" height="4.6" fill="#1c1c1c"/><rect x="0" y="9.3" width="22.5" height="1" fill="#5a5a5a"/><rect x="0" y="12.8" width="22.5" height="1" fill="#5a5a5a"/><rect x="0" y="16.3" width="22.5" height="1" fill="#5a5a5a"/><rect x="0" y="19.6" width="22.5" height="1" fill="#5a5a5a"/><rect x="4.2" y="4.6" width="1" height="22.5" fill="#858585"/></g></svg>
<svg style="left:415px;top:373px;" width="24" height="24" viewBox="0 0 24 24"><circle cx="12" cy="12" r="12" fill="#7a3f00"/><rect x="5.0" y="10.2" width="14" height="3.6" fill="#a3a3a3"/><rect x="10.2" y="5.0" width="3.6" height="14" fill="#a3a3a3"/></svg>
<svg style="left:521.5px;top:374.25px;" width="24" height="20.5" viewBox="0 0 24 20.5"><path d="M4.0 6.0 a2 2 0 0 1 2.0 -2.0 h5.5 a2 2 0 0 1 1.8 1.2 l1.0 1.8 h7.7 a2 2 0 0 1 2.0 2.0 v9.5 a2 2 0 0 1 -2.0 2.0 h-16.0 a2 2 0 0 1 -2.0 -2.0 Z" fill="#9c8545"/><path d="M0 2.0 a2 2 0 0 1 2.0 -2.0 h5.5 a2 2 0 0 1 1.8 1.2 l1.0 1.8 h7.7 a2 2 0 0 1 2.0 2.0 v9.5 a2 2 0 0 1 -2.0 2.0 h-16.0 a2 2 0 0 1 -2.0 -2.0 Z" fill="#826f3c"/></svg>
<svg style="left:624px;top:373px;" width="24" height="24" viewBox="0 0 24 24"><circle cx="12" cy="12" r="12" fill="#27497a"/><path d="M8.2 6.2 L18.2 12 L8.2 17.8 Z" fill="#7f8a9a"/></svg>
<div class="t" style="left:793.8px;top:378px;font-size:18px;line-height:25px;color:#8c8c8c;letter-spacing:-0.11px;">Little House On the Prairie</div>
<div class="t" style="left:1342.5px;top:378px;font-size:18px;line-height:25px;color:#8c8c8c;">Upload script</div>
<div class="t" style="left:1564px;top:378px;font-size:18px;line-height:25px;color:#8c8c8c;letter-spacing:-1.50px;">__/__/____ __:__</div>
<div class="t" style="left:1811.5px;top:378px;font-size:18px;line-height:25px;color:#8c8c8c;letter-spacing:-0.57px;">00:50:00</div>
<div class="t" style="left:1978.5px;top:378px;font-size:18px;line-height:25px;color:#8c8c8c;letter-spacing:-0.58px;">English</div>
<div class="t" style="left:2130px;top:378px;font-size:18px;line-height:25px;color:#8c8c8c;letter-spacing:0.03px;">Pre production</div>
<svg style="left:2332.5px;top:372.5px;" width="26" height="26" viewBox="0 0 26 26"><ellipse cx="12.2" cy="10" rx="12.2" ry="10" fill="#05285e"/><path d="M13 18 L21.5 24.5 L19.5 13 Z" fill="#05285e"/><rect x="10.8" y="7.6" width="2.9" height="8.4" fill="#a3a3a3"/><circle cx="12.2" cy="4.8" r="1.7" fill="#a3a3a3"/></svg>
<svg style="left:2429.5px;top:372.5px;" width="26" height="26" viewBox="0 0 26 26"><ellipse cx="12.2" cy="10" rx="12.2" ry="10" fill="#8a8a8a"/><path d="M13 18 L21.5 24.5 L19.5 13 Z" fill="#8a8a8a"/><circle cx="6.8" cy="9.8" r="1.9" fill="#6e6e6e"/><circle cx="12.2" cy="9.8" r="1.9" fill="#6e6e6e"/><circle cx="17.6" cy="9.8" r="1.9" fill="#6e6e6e"/></svg>
<svg style="left:74px;top:419px;" width="24" height="24" viewBox="0 0 24 24"><circle cx="12" cy="12" r="12" fill="#7a2c04"/><rect x="5" y="9.5" width="14" height="5" fill="#a0a0a0"/></svg>
<div class="t" style="left:169.8px;top:424px;font-size:18px;line-height:25px;color:#8c8c8c;letter-spacing:-0.56px;">187184</div>
<svg style="left:320.75px;top:419.75px;" width="22.5" height="22.5" viewBox="0 0 22.5 22.5"><clipPath id="np332_431"><rect x="0" y="0" width="22.5" height="22.5" rx="5.5"/></clipPath><g clip-path="url(#np332_431)"><rect width="22.5" height="22.5" fill="#a08744"/><rect width="22.5" height="4.6" fill="#1e1c17"/><rect x="0" y="9.3" width="22.5" height="1" fill="#857a52"/><rect x="0" y="12.8" width="22.5" height="1" fill="#857a52"/><rect x="0" y="16.3" width="22.5" height="1" fill="#857a52"/><rect x="0" y="19.6" width="22.5" height="1" fill="#857a52"/><rect x="4.2" y="4.6" width="1" height="22.5" fill="#b0401a"/></g></svg>
<svg style="left:415px;top:419px;" width="24" height="24" viewBox="0 0 24 24"><circle cx="12" cy="12" r="12" fill="#7a3f00"/><rect x="5.0" y="10.2" width="14" height="3.6" fill="#a3a3a3"/><rect x="10.2" y="5.0" width="3.6" height="14" fill="#a3a3a3"/></svg>
<svg style="left:523.5px;top:421px;" width="19" height="21" viewBox="0 0 19 21"><path d="M4 0 H15 V14 L19 17 V21 H0 V20 L4 19 Z" fill="#8a8a8a"/><path d="M1.5 1.5 L11.5 0 V19.5 L0.5 21 Z" fill="#6f6f6f"/></svg>
<svg style="left:624px;top:419px;" width="24" height="24" viewBox="0 0 24 24"><circle cx="12" cy="12" r="12" fill="#8a6f00"/><path d="M8.2 6.2 L18.2 12 L8.2 17.8 Z" fill="#3a2a0a"/></svg>
<div class="t" style="left:793.8px;top:424px;font-size:18px;line-height:25px;color:#8c8c8c;letter-spacing:-0.37px;">The Storm</div>
<div class="t" style="left:1342.5px;top:424px;font-size:18px;line-height:25px;color:#8c8c8c;letter-spacing:-0.09px;">Upload Subtitle File</div>
<div class="t" style="left:1564px;top:424px;font-size:18px;line-height:25px;color:#8c8c8c;letter-spacing:-1.50px;">__/__/____ __:__</div>
<div class="t" style="left:1811.5px;top:424px;font-size:18px;line-height:25px;color:#8c8c8c;letter-spacing:-0.57px;">00:56:00</div>
<div class="t" style="left:1978.5px;top:424px;font-size:18px;line-height:25px;color:#8c8c8c;letter-spacing:-0.58px;">English</div>
<div class="t" style="left:2130px;top:424px;font-size:18px;line-height:25px;color:#8c8c8c;letter-spacing:0.03px;">Pre production</div>
<svg style="left:2332.5px;top:418.5px;" width="26" height="26" viewBox="0 0 26 26"><ellipse cx="12.2" cy="10" rx="12.2" ry="10" fill="#06296a"/><path d="M13 18 L21.5 24.5 L19.5 13 Z" fill="#06296a"/><rect x="10.8" y="7.6" width="2.9" height="8.4" fill="#a3a3a3"/><circle cx="12.2" cy="4.8" r="1.7" fill="#a3a3a3"/></svg>
<svg style="left:2429.5px;top:418.5px;" width="26" height="26" viewBox="0 0 26 26"><path d="M12.2 0.7 C19 0.7 23.7 4.8 23.7 10 C23.7 13 22 15.6 19.3 17.3 L21 23.5 L14.5 19.1 C13.8 19.2 13 19.3 12.2 19.3 C5.5 19.3 0.7 15.2 0.7 10 C0.7 4.8 5.5 0.7 12.2 0.7 Z" fill="none" stroke="#0a0a0a" stroke-width="1.3"/><circle cx="6.8" cy="9.8" r="1.9" fill="#0a0a0a"/><circle cx="12.2" cy="9.8" r="1.9" fill="#0a0a0a"/><circle cx="17.6" cy="9.8" r="1.9" fill="#0a0a0a"/></svg>
<svg style="left:74px;top:465px;" width="24" height="24" viewBox="0 0 24 24"><circle cx="12" cy="12" r="12" fill="#7a2c04"/><rect x="5" y="9.5" width="14" height="5" fill="#a0a0a0"/></svg>
<div class="t" style="left:169.8px;top:470px;font-size:18px;line-height:25px;color:#8c8c8c;letter-spacing:-0.56px;">187198</div>
<svg style="left:320.75px;top:465.75px;" width="22.5" height="22.5" viewBox="0 0 22.5 22.5"><clipPath id="np332_477"><rect x="0" y="0" width="22.5" height="22.5" rx="5.5"/></clipPath><g clip-path="url(#np332_477)"><rect width="22.5" height="22.5" fill="#a08744"/><rect width="22.5" height="4.6" fill="#1e1c17"/><rect x="0" y="9.3" width="22.5" height="1" fill="#857a52"/><rect x="0" y="12.8" width="22.5" height="1" fill="#857a52"/><rect x="0" y="16.3" width="22.5" height="1" fill="#857a52"/><rect x="0" y="19.6" width="22.5" height="1" fill="#857a52"/><rect x="4.2" y="4.6" width="1" height="22.5" fill="#b0401a"/></g></svg>
<svg style="left:415px;top:465px;" width="24" height="24" viewBox="0 0 24 24"><circle cx="12" cy="12" r="12" fill="#7a3f00"/><rect x="5.0" y="10.2" width="14" height="3.6" fill="#a3a3a3"/><rect x="10.2" y="5.0" width="3.6" height="14" fill="#a3a3a3"/></svg>
<svg style="left:521.5px;top:466.25px;" width="24" height="20.5" viewBox="0 0 24 20.5"><path d="M4.0 6.0 a2 2 0 0 1 2.0 -2.0 h5.5 a2 2 0 0 1 1.8 1.2 l1.0 1.8 h7.7 a2 2 0 0 1 2.0 2.0 v9.5 a2 2 0 0 1 -2.0 2.0 h-16.0 a2 2 0 0 1 -2.0 -2.0 Z" fill="#9c8545"/><path d="M0 2.0 a2 2 0 0 1 2.0 -2.0 h5.5 a2 2 0 0 1 1.8 1.2 l1.0 1.8 h7.7 a2 2 0 0 1 2.0 2.0 v9.5 a2 2 0 0 1 -2.0 2.0 h-16.0 a2 2 0 0 1 -2.0 -2.0 Z" fill="#826f3c"/></svg>
<svg style="left:624px;top:465px;" width="24" height="24" viewBox="0 0 24 24"><circle cx="12" cy="12" r="12" fill="#264f82"/><path d="M8.2 6.2 L18.2 12 L8.2 17.8 Z" fill="#9a9a9a"/></svg>
<div class="t" style="left:793.8px;top:470px;font-size:18px;line-height:25px;color:#8c8c8c;letter-spacing:-0.29px;">Spiderman Returns</div>
<div class="t" style="left:1114px;top:470px;font-size:18px;line-height:25px;color:#8c8c8c;letter-spacing:0.05px;">Subtitling #1 (52)</div>
<div class="t" style="left:1342.5px;top:470px;font-size:18px;line-height:25px;color:#8c8c8c;letter-spacing:-0.31px;">Translation</div>
<div class="t" style="left:1564px;top:470px;font-size:18px;line-height:25px;color:#8c8c8c;letter-spacing:-0.07px;">30/09/2022 16:00</div>
<div class="t" style="left:1811.5px;top:470px;font-size:18px;line-height:25px;color:#8c8c8c;letter-spacing:-0.57px;">00:40:00</div>
<div class="t" style="left:1978.5px;top:470px;font-size:18px;line-height:25px;color:#8c8c8c;letter-spacing:-0.58px;">English</div>
<div class="t" style="left:2130px;top:470px;font-size:18px;line-height:25px;color:#8c8c8c;letter-spacing:-0.72px;">Spanish</div>
<svg style="left:2332.5px;top:464.5px;" width="26" height="26" viewBox="0 0 26 26"><ellipse cx="12.2" cy="10" rx="12.2" ry="10" fill="#06296a"/><path d="M13 18 L21.5 24.5 L19.5 13 Z" fill="#06296a"/><rect x="10.8" y="7.6" width="2.9" height="8.4" fill="#a3a3a3"/><circle cx="12.2" cy="4.8" r="1.7" fill="#a3a3a3"/></svg>
<svg style="left:2429.5px;top:464.5px;" width="26" height="26" viewBox="0 0 26 26"><path d="M12.2 0.7 C19 0.7 23.7 4.8 23.7 10 C23.7 13 22 15.6 19.3 17.3 L21 23.5 L14.5 19.1 C13.8 19.2 13 19.3 12.2 19.3 C5.5 19.3 0.7 15.2 0.7 10 C0.7 4.8 5.5 0.7 12.2 0.7 Z" fill="none" stroke="#0a0a0a" stroke-width="1.3"/><circle cx="6.8" cy="9.8" r="1.9" fill="#0a0a0a"/><circle cx="12.2" cy="9.8" r="1.9" fill="#0a0a0a"/><circle cx="17.6" cy="9.8" r="1.9" fill="#0a0a0a"/></svg>
<svg style="left:74px;top:514px;" width="24" height="24" viewBox="0 0 24 24"><circle cx="12" cy="12" r="12" fill="#456b0c"/><path d="M5.5 12.5 L9.8 16.8 L18.5 7.5" stroke="#a5a5a5" stroke-width="3.6" fill="none"/></svg>
<div class="t" style="left:169.8px;top:519px;font-size:18px;line-height:25px;color:#8c8c8c;letter-spacing:-0.42px;">181127</div>
<svg style="left:320.75px;top:514.75px;" width="22.5" height="22.5" viewBox="0 0 22.5 22.5"><clipPath id="np332_526"><rect x="0" y="0" width="22.5" height="22.5" rx="5.5"/></clipPath><g clip-path="url(#np332_526)"><rect width="22.5" height="22.5" fill="#6f6f6f"/><rect width="22.5" height="4.6" fill="#1c1c1c"/><rect x="0" y="9.3" width="22.5" height="1" fill="#5a5a5a"/><rect x="0" y="12.8" width="22.5" height="1" fill="#5a5a5a"/><rect x="0" y="16.3" width="22.5" height="1" fill="#5a5a5a"/><rect x="0" y="19.6" width="22.5" height="1" fill="#5a5a5a"/><rect x="4.2" y="4.6" width="1" height="22.5" fill="#858585"/></g></svg>
<svg style="left:415px;top:514px;" width="24" height="24" viewBox="0 0 24 24"><circle cx="12" cy="12" r="12" fill="#7a3f00"/><rect x="5.0" y="10.2" width="14" height="3.6" fill="#a3a3a3"/><rect x="10.2" y="5.0" width="3.6" height="14" fill="#a3a3a3"/></svg>
<svg style="left:521.5px;top:515.25px;" width="24" height="20.5" viewBox="0 0 24 20.5"><path d="M4.0 6.0 a2 2 0 0 1 2.0 -2.0 h5.5 a2 2 0 0 1 1.8 1.2 l1.0 1.8 h7.7 a2 2 0 0 1 2.0 2.0 v9.5 a2 2 0 0 1 -2.0 2.0 h-16.0 a2 2 0 0 1 -2.0 -2.0 Z" fill="#9c8545"/><path d="M0 2.0 a2 2 0 0 1 2.0 -2.0 h5.5 a2 2 0 0 1 1.8 1.2 l1.0 1.8 h7.7 a2 2 0 0 1 2.0 2.0 v9.5 a2 2 0 0 1 -2.0 2.0 h-16.0 a2 2 0 0 1 -2.0 -2.0 Z" fill="#826f3c"/></svg>
<svg style="left:624px;top:514px;" width="24" height="24" viewBox="0 0 24 24"><circle cx="12" cy="12" r="12" fill="#264f82"/><path d="M8.2 6.2 L18.2 12 L8.2 17.8 Z" fill="#9a9a9a"/></svg>
<svg style="left:722px;top:514px;" width="24" height="24" viewBox="0 0 24 24"><rect width="24" height="24" rx="4" fill="#9a7a4a"/><rect x="3" y="6" width="18" height="12.5" fill="#0b0b0b"/><text x="12" y="16" text-anchor="middle" font-family="Liberation Sans, sans-serif" font-weight="700" font-size="10.5" fill="#9a7a4a" letter-spacing="-0.3">CC</text></svg>
<div class="t" style="left:793.8px;top:519px;font-size:18px;line-height:25px;color:#8c8c8c;letter-spacing:-0.07px;">Sliding Doors</div>
<div class="t" style="left:1114px;top:519px;font-size:18px;line-height:25px;color:#8c8c8c;letter-spacing:-0.69px;">SDH (23)</div>
<div class="t" style="left:1342.5px;top:519px;font-size:18px;line-height:25px;color:#8c8c8c;letter-spacing:-0.32px;">Transcribing</div>
<div class="t" style="left:1564px;top:519px;font-size:18px;line-height:25px;color:#8c8c8c;letter-spacing:-0.07px;">26/09/2022 02:00</div>
<div class="t" style="left:1811.5px;top:519px;font-size:18px;line-height:25px;color:#8c8c8c;letter-spacing:-0.57px;">00:22:30</div>
<div class="t" style="left:1978.5px;top:519px;font-size:18px;line-height:25px;color:#8c8c8c;letter-spacing:-0.58px;">English</div>
<div class="t" style="left:2130px;top:519px;font-size:18px;line-height:25px;color:#8c8c8c;letter-spacing:-0.21px;">Dutch</div>
<svg style="left:2332.5px;top:513.5px;" width="26" height="26" viewBox="0 0 26 26"><ellipse cx="12.2" cy="10" rx="12.2" ry="10" fill="#06296a"/><path d="M13 18 L21.5 24.5 L19.5 13 Z" fill="#06296a"/><rect x="10.8" y="7.6" width="2.9" height="8.4" fill="#a3a3a3"/><circle cx="12.2" cy="4.8" r="1.7" fill="#a3a3a3"/></svg>
<svg style="left:2429.5px;top:513.5px;" width="26" height="26" viewBox="0 0 26 26"><ellipse cx="12.2" cy="10" rx="12.2" ry="10" fill="#8a7f42"/><path d="M13 18 L21.5 24.5 L19.5 13 Z" fill="#8a7f42"/><circle cx="6.8" cy="9.8" r="1.9" fill="#6a5a10"/><circle cx="12.2" cy="9.8" r="1.9" fill="#6a5a10"/><circle cx="17.6" cy="9.8" r="1.9" fill="#6a5a10"/></svg>
<div style="left:2535px;top:360px;width:10px;height:500px;overflow:hidden"><svg style="left:0;top:0" width="30" height="500"><circle cx="17" cy="25.5" r="12" fill="#6e6e6e"/><circle cx="17" cy="71" r="12" fill="#6e6e6e"/><circle cx="17" cy="117" r="12" fill="#4a7a0e"/><circle cx="17" cy="166" r="12" fill="#6e6e6e"/><circle cx="16" cy="224.5" r="11" fill="#6e6e6e"/><circle cx="16" cy="288.6" r="11" fill="#4a7a0e"/><circle cx="16" cy="347" r="11" fill="#4a7a0e"/><circle cx="16" cy="402" r="11" fill="#6e6e6e"/><circle cx="16" cy="455.4" r="11" fill="#4a7a0e"/></svg></div>
<div style="left:2545px;top:208px;width:16px;height:1062px;background:#121112"></div>
<div style="left:17px;top:1132px;width:2528px;height:25px;background:#1c1c1c"></div>
<div style="left:17px;top:1132px;width:15px;height:25px;background:#7d7d7d"></div>
<svg style="left:20.5px;top:1139px;" width="8" height="11" viewBox="0 0 8 11"><path d="M8 0 L0 5.5 L8 11 Z" fill="#2a2a2a"/></svg>
<div style="left:2517px;top:1132px;width:28px;height:25px;background:#7b7b7b"></div>
<svg style="left:2528px;top:1139px;" width="7" height="11" viewBox="0 0 7 11"><path d="M0 0 L7 5.5 L0 11 Z" fill="#2a2a2a"/></svg>
<div style="left:17px;top:1157px;width:2528px;height:112px;background:linear-gradient(#232323 0%,#1a1a1a 40%,#111011 100%)"></div>
<div style="left:16px;top:1269px;width:2529px;height:1px;background:#2a292a"></div>
<div style="left:100px;top:1256px;width:60px;height:7px;overflow:hidden"><div style="left:10px;top:-24.5px;width:31px;height:31px;border-radius:50%;background:#0a3a72"></div></div>
<div style="left:212px;top:1256px;width:52px;height:6.5px;background:#7e7e7e;border-radius:0 0 5px 5px"></div>
<div style="left:423px;top:1256px;width:51px;height:6.5px;background:#7e7e7e;border-radius:0 0 0 5px"></div>
<svg style="left:26px;top:1168.5px;" width="7" height="7.5" viewBox="0 0 7 7.5"><path d="M0 0 H7 V7.5 Z" fill="#1a7896"/></svg>
<svg style="left:2505px;top:1228px;" width="32" height="32" viewBox="0 0 32 32"><circle cx="16" cy="16" r="16" fill="#1c1c1c"/><path d="M16 6 A10 10 0 1 1 7 21" stroke="#8a8a8a" stroke-width="2.6" fill="none"/><path d="M12 1 L19 6 L12 10 Z" fill="#8a8a8a"/></svg>
<div class="t" style="left:24px;top:1294px;font-size:19.5px;line-height:27px;color:#8a8a8a;letter-spacing:-0.79px;">Edit mode: <b>read only</b></div>
<div style="left:199px;top:1282.7px;width:51px;height:46.4px;border-radius:6px;background:linear-gradient(#0d3b6e 0%,#0b3868 48%,#04346a 55%,#013266 100%)"></div>
<svg style="left:213.6px;top:1298.6px;" width="23" height="23" viewBox="0 0 23 23"><rect x="0.0" y="0.0" width="7.1" height="7.1" fill="#848484"/><rect x="0.0" y="7.9" width="7.1" height="7.1" fill="#848484"/><rect x="0.0" y="15.8" width="7.1" height="7.1" fill="#848484"/><rect x="7.9" y="0.0" width="7.1" height="7.1" fill="#848484"/><rect x="7.9" y="7.9" width="7.1" height="7.1" fill="#848484"/><rect x="7.9" y="15.8" width="7.1" height="7.1" fill="#848484"/><rect x="15.8" y="0.0" width="7.1" height="7.1" fill="#848484"/><rect x="15.8" y="7.9" width="7.1" height="7.1" fill="#848484"/><rect x="15.8" y="15.8" width="7.1" height="7.1" fill="#848484"/></svg>
<div style="left:257px;top:1281px;width:55px;height:51px;border-radius:5px;background:linear-gradient(#1c1c1c 0%,#1e1e1e 45%,#171717 55%,#141414 100%)"></div>
<svg style="left:272px;top:1297px;" width="26" height="26" viewBox="0 0 26 26"><path d="M1.6 15.2 L9.9 23 L24 8.3" stroke="#868686" stroke-width="5" fill="none"/><path d="M4.6 7.9 L10.4 12.9 L19.3 2.6" stroke="#868686" stroke-width="4" fill="none"/></svg>
<div class="t" style="left:1096px;top:1354px;font-size:15px;line-height:21px;color:#868686;letter-spacing:-0.07px;">Copyright © 2012 </div>
<div class="t" style="left:1218.2px;top:1354px;font-size:15px;line-height:21px;color:#4a4b4d;"><span style="color:#55575a;font-style:italic;letter-spacing:-2.1px">O</span><span style="color:#9a7410;font-style:italic;letter-spacing:-2.1px">O</span><span style="color:#1a84a8;font-style:italic;letter-spacing:-2.1px">O</span><span style="color:#4a4b4d;margin-left:1.5px">NA.NET</span></div>
<div class="t" style="left:1306.4px;top:1354px;font-size:15px;line-height:21px;color:#868686;letter-spacing:-0.05px;">ltd. All rights reserved.</div>
<div style="left:2479.5px;top:1350px;width:78px;height:22px;border-radius:6px;background:#4d0003"></div>
<div class="t" style="left:2484px;top:1351px;font-size:14.5px;line-height:20px;color:#8a8a8a;letter-spacing:-0.91px;">Zoom 150%</div>
<div style="left:0px;top:1373px;width:2561px;height:2px;background:#e9e9e9"></div>
<div style="left:2560px;top:685px;width:1px;height:690px;background:#0b2a55"></div>
<div style="left:2560px;top:877px;width:1px;height:48px;background:#e9e9e9"></div>
<div style="left:32px;top:555px;width:2485px;height:701.5px;border-radius:5px;background:#4e4e4e;border:1px solid #343434;box-shadow:0 0 14px 2px rgba(150,150,150,.16)"></div>
<div style="left:33px;top:556px;width:2483px;height:62px;border-radius:5px 5px 0 0;background:linear-gradient(#5f5d5a 0%,#53504e 20%,#433f3e 55%,#302c2b 82%,#282524 100%)"></div>
<svg style="left:51px;top:570px;" width="36.5" height="32" viewBox="0 0 36.5 32"><rect x="0" y="0" width="9" height="32" fill="#8a8d92"/><rect x="28" y="0.3" width="8.5" height="31.4" fill="#2dbfe8"/><path d="M36.5 10.8 A5.4 5.4 0 0 0 36.5 21.2 Z" fill="#302e2e"/><path d="M3.2 0.6 H18.8 A16 16 0 0 1 18.8 32 A16 16 0 0 1 3.2 19 Z" fill="#f7c21e"/><path d="M3.2 0.6 H9.5 Q15.5 7 15.3 16 Q15 24 9.3 28.6 Q3.8 24 3.2 15 Z" fill="#8a6400"/><path d="M28 3.2 Q34 9 34 16 Q34 23 28 28.8 Q22 23 22 16 Q22 9 28 3.2 Z" fill="#8fa33a"/><circle cx="18.6" cy="16" r="5.1" fill="#363434"/><path d="M15.3 12.1 A5.1 5.1 0 0 0 15.3 19.9 A6 6 0 0 0 15.3 12.1Z" fill="#8a8d92"/><path d="M21.9 12.1 A5.1 5.1 0 0 1 21.9 19.9 A6 6 0 0 1 21.9 12.1Z" fill="#2dbfe8"/></svg>
<div class="t" style="left:102px;top:574px;font-size:17.5px;line-height:24px;color:#fff;letter-spacing:0.26px;">OOONA Manager - Task <b>Upload script</b> for order number <b>187173</b> file list</div>
<div style="left:2408.3px;top:586.9px;width:16.4px;height:3.4px;background:#c8c8c8"></div>
<div style="left:2444.3px;top:578px;width:16.3px;height:15.3px;border:2.5px solid #c8c8c8;border-top-width:5px"></div>
<svg style="left:2480.7px;top:577.9px;" width="15.5" height="15.5" viewBox="0 0 15.5 15.5"><path d="M1.2 1.2 L14.3 14.3 M14.3 1.2 L1.2 14.3" stroke="#c8c8c8" stroke-width="3.3"/></svg>
<svg style="left:921.4px;top:649.112px;" width="37.2" height="31.775" viewBox="0 0 37.2 31.775"><path d="M6.2 9.3 a2 2 0 0 1 3.1 -3.1 h8.525 a2 2 0 0 1 2.79 1.8599999999999999 l1.55 2.79 h11.935 a2 2 0 0 1 3.1 3.1 v14.725 a2 2 0 0 1 -3.1 3.1 h-24.8 a2 2 0 0 1 -3.1 -3.1 Z" fill="#c9a227"/><path d="M0 3.1 a2 2 0 0 1 3.1 -3.1 h8.525 a2 2 0 0 1 2.79 1.8599999999999999 l1.55 2.79 h11.935 a2 2 0 0 1 3.1 3.1 v14.725 a2 2 0 0 1 -3.1 3.1 h-24.8 a2 2 0 0 1 -3.1 -3.1 Z" fill="#f7d046"/></svg>
<div class="t" style="left:982.5px;top:645px;font-size:29.2px;line-height:40px;color:#fff;letter-spacing:-0.32px;">Task <b>Upload script</b> for order number <b>187173</b> file list</div>
<div style="left:51.2px;top:700.3px;width:1.2px;height:555.7px;background:#363434"></div>
<div style="left:2496.6px;top:700.3px;width:1.2px;height:555.7px;background:#363434"></div>
<div style="left:51.2px;top:700.3px;width:2446.6px;height:1.3px;background:#363434"></div>
<div style="left:53px;top:702px;width:2444px;height:48px;background:linear-gradient(#292524 0%,#2b2827 22%,#403d3c 100%)"></div>
<div style="left:53px;top:750px;width:2444px;height:50px;background:linear-gradient(#3b3837 0%,#272424 100%)"></div>
<div style="left:53px;top:800px;width:2444px;height:57px;background:#272424"></div>
<div style="left:383.5px;top:702px;width:180px;height:48px;background:linear-gradient(#242121 0%,#272424 40%,#343232 100%)"></div>
<div style="left:383.5px;top:750px;width:180px;height:50px;background:linear-gradient(#3b3939 0%,#272424 100%)"></div>
<div style="left:173px;top:702px;width:1px;height:155px;background:rgba(0,0,0,.22)"></div>
<div style="left:174px;top:702px;width:1px;height:155px;background:rgba(255,255,255,.035)"></div>
<div style="left:248px;top:702px;width:1px;height:155px;background:rgba(0,0,0,.22)"></div>
<div style="left:249px;top:702px;width:1px;height:155px;background:rgba(255,255,255,.035)"></div>
<div style="left:293px;top:702px;width:1px;height:155px;background:rgba(0,0,0,.22)"></div>
<div style="left:294px;top:702px;width:1px;height:155px;background:rgba(255,255,255,.035)"></div>
<div style="left:383px;top:702px;width:1px;height:155px;background:rgba(0,0,0,.22)"></div>
<div style="left:384px;top:702px;width:1px;height:155px;background:rgba(255,255,255,.035)"></div>
<div style="left:443px;top:750px;width:1px;height:107px;background:rgba(0,0,0,.22)"></div>
<div style="left:444px;top:750px;width:1px;height:107px;background:rgba(255,255,255,.035)"></div>
<div style="left:503px;top:750px;width:1px;height:107px;background:rgba(0,0,0,.22)"></div>
<div style="left:504px;top:750px;width:1px;height:107px;background:rgba(255,255,255,.035)"></div>
<div style="left:563px;top:702px;width:1px;height:155px;background:rgba(0,0,0,.22)"></div>
<div style="left:564px;top:702px;width:1px;height:155px;background:rgba(255,255,255,.035)"></div>
<div style="left:683px;top:702px;width:1px;height:155px;background:rgba(0,0,0,.22)"></div>
<div style="left:684px;top:702px;width:1px;height:155px;background:rgba(255,255,255,.035)"></div>
<div style="left:833px;top:702px;width:1px;height:155px;background:rgba(0,0,0,.22)"></div>
<div style="left:834px;top:702px;width:1px;height:155px;background:rgba(255,255,255,.035)"></div>
<div style="left:983px;top:702px;width:1px;height:155px;background:rgba(0,0,0,.22)"></div>
<div style="left:984px;top:702px;width:1px;height:155px;background:rgba(255,255,255,.035)"></div>
<div style="left:1155px;top:702px;width:1px;height:155px;background:rgba(0,0,0,.22)"></div>
<div style="left:1156px;top:702px;width:1px;height:155px;background:rgba(255,255,255,.035)"></div>
<div style="left:1236px;top:702px;width:1px;height:155px;background:rgba(0,0,0,.22)"></div>
<div style="left:1237px;top:702px;width:1px;height:155px;background:rgba(255,255,255,.035)"></div>
<div style="left:1356px;top:702px;width:1px;height:155px;background:rgba(0,0,0,.22)"></div>
<div style="left:1357px;top:702px;width:1px;height:155px;background:rgba(255,255,255,.035)"></div>
<div style="left:1542px;top:702px;width:1px;height:155px;background:rgba(0,0,0,.22)"></div>
<div style="left:1543px;top:702px;width:1px;height:155px;background:rgba(255,255,255,.035)"></div>
<div style="left:1770px;top:702px;width:1px;height:155px;background:rgba(0,0,0,.22)"></div>
<div style="left:1771px;top:702px;width:1px;height:155px;background:rgba(255,255,255,.035)"></div>
<div style="left:1965px;top:702px;width:1px;height:155px;background:rgba(0,0,0,.22)"></div>
<div style="left:1966px;top:702px;width:1px;height:155px;background:rgba(255,255,255,.035)"></div>
<div style="left:2100px;top:702px;width:1px;height:155px;background:rgba(0,0,0,.22)"></div>
<div style="left:2101px;top:702px;width:1px;height:155px;background:rgba(255,255,255,.035)"></div>
<div style="left:2250px;top:702px;width:1px;height:155px;background:rgba(0,0,0,.22)"></div>
<div style="left:2251px;top:702px;width:1px;height:155px;background:rgba(255,255,255,.035)"></div>
<div style="left:2435px;top:702px;width:1px;height:155px;background:rgba(0,0,0,.22)"></div>
<div style="left:2436px;top:702px;width:1px;height:155px;background:rgba(255,255,255,.035)"></div>
<div style="left:383.5px;top:749.5px;width:180px;height:1px;background:#221f1f"></div>
<div class="t" style="left:65px;top:744px;font-size:18px;line-height:25px;color:#fff;letter-spacing:0.12px;">Mail</div>
<div class="t" style="left:65px;top:768px;font-size:18px;line-height:25px;color:#fff;letter-spacing:0.12px;">file</div>
<svg style="left:126px;top:745.5px;" width="20" height="19" viewBox="0 0 20 19"><path d="M1.3 11.2 L7.4 17 L18.2 5.8" stroke="#fff" stroke-width="3.7" fill="none"/><path d="M3.6 5.6 L7.8 9.4 L14.3 1.8" stroke="#fff" stroke-width="3" fill="none"/></svg>
<svg style="left:153.2px;top:746.5px;" width="6" height="21" viewBox="0 0 6 21"><circle cx="3" cy="3.0" r="2.5" fill="#fff"/><circle cx="3" cy="10.5" r="2.5" fill="#fff"/><circle cx="3" cy="18.0" r="2.5" fill="#fff"/></svg>
<div class="t" style="left:185px;top:744px;font-size:18px;line-height:25px;color:#fff;letter-spacing:-0.63px;">File</div>
<div class="t" style="left:185px;top:768px;font-size:18px;line-height:25px;color:#fff;letter-spacing:0.12px;">Info</div>
<div class="t" style="left:260.5px;top:768px;font-size:18px;line-height:25px;color:#fff;width:32px;overflow:hidden">Delete</div>
<div class="t" style="left:305px;top:720px;font-size:18px;line-height:25px;color:#fff;">Upload</div>
<div class="t" style="left:305px;top:744px;font-size:18px;line-height:25px;color:#fff;">New</div>
<div class="t" style="left:305px;top:768px;font-size:18px;line-height:25px;color:#fff;letter-spacing:-0.29px;">Version</div>
<div class="t" style="left:430.7px;top:719px;font-size:18px;line-height:25px;color:#fff;font-weight:700;letter-spacing:-0.05px;">Download</div>
<div class="t" style="left:395px;top:767px;font-size:18px;line-height:25px;color:#fff;letter-spacing:-0.33px;">Web</div>
<div class="t" style="left:455px;top:767px;font-size:18px;line-height:25px;color:#fff;width:47.5px;overflow:hidden">Agent</div>
<div class="t" style="left:515px;top:767px;font-size:18px;line-height:25px;color:#fff;letter-spacing:-0.35px;">Log</div>
<div class="t" style="left:575px;top:766px;font-size:18px;line-height:25px;color:#fff;letter-spacing:-0.29px;">Version</div>
<svg style="left:663px;top:767.5px;" width="6" height="21" viewBox="0 0 6 21"><circle cx="3" cy="3.0" r="2.5" fill="#fff"/><circle cx="3" cy="10.5" r="2.5" fill="#fff"/><circle cx="3" cy="18.0" r="2.5" fill="#fff"/></svg>
<div class="t" style="left:695px;top:766px;font-size:18px;line-height:25px;color:#fff;letter-spacing:-0.63px;">Step</div>
<svg style="left:813.2px;top:767.5px;" width="6" height="21" viewBox="0 0 6 21"><circle cx="3" cy="3.0" r="2.5" fill="#fff"/><circle cx="3" cy="10.5" r="2.5" fill="#fff"/><circle cx="3" cy="18.0" r="2.5" fill="#fff"/></svg>
<div class="t" style="left:845px;top:766px;font-size:18px;line-height:25px;color:#fff;">Product</div>
<svg style="left:963.5px;top:767.5px;" width="6" height="21" viewBox="0 0 6 21"><circle cx="3" cy="3.0" r="2.5" fill="#fff"/><circle cx="3" cy="10.5" r="2.5" fill="#fff"/><circle cx="3" cy="18.0" r="2.5" fill="#fff"/></svg>
<div class="t" style="left:995.5px;top:766px;font-size:18px;line-height:25px;color:#fff;letter-spacing:-1.13px;">Task</div>
<svg style="left:1135.7px;top:767.5px;" width="6" height="21" viewBox="0 0 6 21"><circle cx="3" cy="3.0" r="2.5" fill="#fff"/><circle cx="3" cy="10.5" r="2.5" fill="#fff"/><circle cx="3" cy="18.0" r="2.5" fill="#fff"/></svg>
<div class="t" style="left:1167.5px;top:720px;font-size:18px;line-height:25px;color:#fff;letter-spacing:-0.63px;">File</div>
<div class="t" style="left:1167.5px;top:744px;font-size:18px;line-height:25px;color:#fff;letter-spacing:-0.51px;">Type</div>
<div class="t" style="left:1167.5px;top:768px;font-size:18px;line-height:25px;color:#fff;letter-spacing:-0.11px;">Image</div>
<div class="t" style="left:1248.7px;top:766px;font-size:18px;line-height:25px;color:#fff;letter-spacing:-0.68px;">Exten...</div>
<svg style="left:1337px;top:767.5px;" width="6" height="21" viewBox="0 0 6 21"><circle cx="3" cy="3.0" r="2.5" fill="#fff"/><circle cx="3" cy="10.5" r="2.5" fill="#fff"/><circle cx="3" cy="18.0" r="2.5" fill="#fff"/></svg>
<div class="t" style="left:1368.7px;top:766px;font-size:18px;line-height:25px;color:#fff;letter-spacing:-0.19px;">File type</div>
<svg style="left:1522.7px;top:767.5px;" width="6" height="21" viewBox="0 0 6 21"><circle cx="3" cy="3.0" r="2.5" fill="#fff"/><circle cx="3" cy="10.5" r="2.5" fill="#fff"/><circle cx="3" cy="18.0" r="2.5" fill="#fff"/></svg>
<div class="t" style="left:1555px;top:766px;font-size:18px;line-height:25px;color:#fff;letter-spacing:-0.05px;">Description</div>
<svg style="left:1750.7px;top:767.5px;" width="6" height="21" viewBox="0 0 6 21"><circle cx="3" cy="3.0" r="2.5" fill="#fff"/><circle cx="3" cy="10.5" r="2.5" fill="#fff"/><circle cx="3" cy="18.0" r="2.5" fill="#fff"/></svg>
<div class="t" style="left:1782.5px;top:766px;font-size:18px;line-height:25px;color:#fff;letter-spacing:-0.08px;">Creation date</div>
<svg style="left:1945.7px;top:767.5px;" width="6" height="21" viewBox="0 0 6 21"><circle cx="3" cy="3.0" r="2.5" fill="#fff"/><circle cx="3" cy="10.5" r="2.5" fill="#fff"/><circle cx="3" cy="18.0" r="2.5" fill="#fff"/></svg>
<div class="t" style="left:1977.5px;top:739px;font-size:18px;line-height:25px;color:#fff;letter-spacing:-0.56px;">File size</div>
<div class="t" style="left:1977.5px;top:766px;font-size:18px;line-height:25px;color:#fff;letter-spacing:-0.45px;">(In Bytes)</div>
<svg style="left:2080.7px;top:740.5px;" width="6" height="21" viewBox="0 0 6 21"><circle cx="3" cy="3.0" r="2.5" fill="#fff"/><circle cx="3" cy="10.5" r="2.5" fill="#fff"/><circle cx="3" cy="18.0" r="2.5" fill="#fff"/></svg>
<div class="t" style="left:2112.5px;top:766px;font-size:18px;line-height:25px;color:#fff;letter-spacing:-0.19px;">Created by</div>
<svg style="left:2230.7px;top:767.5px;" width="6" height="21" viewBox="0 0 6 21"><circle cx="3" cy="3.0" r="2.5" fill="#fff"/><circle cx="3" cy="10.5" r="2.5" fill="#fff"/><circle cx="3" cy="18.0" r="2.5" fill="#fff"/></svg>
<div class="t" style="left:2263px;top:739px;font-size:18px;line-height:25px;color:#fff;">File product</div>
<div class="t" style="left:2263px;top:766px;font-size:18px;line-height:25px;color:#fff;">type</div>
<svg style="left:2414.5px;top:740.5px;" width="6" height="21" viewBox="0 0 6 21"><circle cx="3" cy="3.0" r="2.5" fill="#fff"/><circle cx="3" cy="10.5" r="2.5" fill="#fff"/><circle cx="3" cy="18.0" r="2.5" fill="#fff"/></svg>
<div class="t" style="left:2447px;top:766px;font-size:18px;line-height:25px;color:#fff;width:49px;overflow:hidden">Customer</div>
<div style="left:576px;top:810.5px;width:53px;height:36.5px;border-radius:5px;background:linear-gradient(#353333,#2a2828)"></div>
<div style="left:576px;top:810.5px;width:15.299999999999955px;height:36.5px;background:#fff;border-radius:5px 0 0 5px"></div>
<div style="left:592.3px;top:811.5px;width:1px;height:34.5px;background:#d8d8d8"></div>
<svg style="left:604.7px;top:815px;" width="12" height="9" viewBox="0 0 12 9"><path d="M0 9 L6 0 L12 9 Z" fill="#fff"/></svg>
<svg style="left:604.7px;top:832.5px;" width="12" height="9" viewBox="0 0 12 9"><path d="M0 0 L6 9 L12 0 Z" fill="#fff"/></svg>
<div style="left:695.7px;top:810.5px;width:38.59999999999991px;height:36.5px;background:#fff;border-radius:5px"></div>
<div style="left:739.5px;top:810.5px;width:37.5px;height:36.5px;border-radius:4px;background:linear-gradient(#3b3939,#2a2828)"></div>
<svg style="left:748.2px;top:821px;" width="20" height="20" viewBox="0 0 20 20"><path d="M0 0 H20 L12.0 9.0 V15.600000000000001 L8.0 20 V9.0 Z" fill="#fff"/></svg>
<div style="left:845.7px;top:810.5px;width:38.59999999999991px;height:36.5px;background:#fff;border-radius:5px"></div>
<div style="left:889.5px;top:810.5px;width:37.5px;height:36.5px;border-radius:4px;background:linear-gradient(#3b3939,#2a2828)"></div>
<svg style="left:898.2px;top:821px;" width="20" height="20" viewBox="0 0 20 20"><path d="M0 0 H20 L12.0 9.0 V15.600000000000001 L8.0 20 V9.0 Z" fill="#fff"/></svg>
<div style="left:995.7px;top:810.5px;width:61.799999999999955px;height:36.5px;background:#fff;border-radius:5px"></div>
<div style="left:1061.7px;top:810.5px;width:37.5px;height:36.5px;border-radius:4px;background:linear-gradient(#3b3939,#2a2828)"></div>
<svg style="left:1070.4px;top:821px;" width="20" height="20" viewBox="0 0 20 20"><path d="M0 0 H20 L12.0 9.0 V15.600000000000001 L8.0 20 V9.0 Z" fill="#fff"/></svg>
<div style="left:1167px;top:816px;width:5.5px;height:24px;background:#0a62d0"></div>
<div style="left:1249.2px;top:810.5px;width:8.799999999999955px;height:36.5px;background:#fff;border-radius:5px"></div>
<div style="left:1262.5px;top:810.5px;width:37.5px;height:36.5px;border-radius:4px;background:linear-gradient(#3b3939,#2a2828)"></div>
<svg style="left:1271.2px;top:821px;" width="20" height="20" viewBox="0 0 20 20"><path d="M0 0 H20 L12.0 9.0 V15.600000000000001 L8.0 20 V9.0 Z" fill="#fff"/></svg>
<div style="left:1369.2px;top:810.5px;width:120.09999999999991px;height:36.5px;background:#fff;border-radius:5px"></div>
<div style="left:1555px;top:810.5px;width:117px;height:36.5px;background:#fff;border-radius:5px"></div>
<div style="left:1676.7px;top:810.5px;width:37.5px;height:36.5px;border-radius:4px;background:linear-gradient(#3b3939,#2a2828)"></div>
<svg style="left:1685.4px;top:821px;" width="20" height="20" viewBox="0 0 20 20"><path d="M0 0 H20 L12.0 9.0 V15.600000000000001 L8.0 20 V9.0 Z" fill="#fff"/></svg>
<div style="left:1783.7px;top:810.5px;width:129px;height:36.5px;border-radius:5px;background:linear-gradient(#343232,#2a2828)"></div>
<div style="left:1783.7px;top:810.5px;width:54.5px;height:36.5px;background:#fff;border-radius:5px 0 0 5px"></div>
<svg style="left:1846.2px;top:818.7px;" width="22" height="22" viewBox="0 0 22 22"><path d="M1 3.0 H21.0 V21.0 H1 Z" fill="none" stroke="#fff" stroke-width="2.0"/><rect x="1" y="3.0" width="20.0" height="3.5" fill="#fff"/><rect x="4.5" y="0" width="3.0" height="4.5" fill="#fff"/><rect x="14.5" y="0" width="3.0" height="4.5" fill="#fff"/><rect x="12.0" y="12.5" width="6.0" height="5.5" fill="#fff"/></svg>
<svg style="left:1882px;top:818.8px;" width="22.4" height="22.4" viewBox="0 0 22.4 22.4"><circle cx="11.2" cy="11.2" r="10.2" fill="none" stroke="#fff" stroke-width="2"/><path d="M11.2 5.699999999999999 V11.7 H17.2" stroke="#fff" stroke-width="2" fill="none"/></svg>
<div style="left:1977.5px;top:810.5px;width:30px;height:36.5px;border-radius:4px 0 0 4px;background:linear-gradient(#3b3939,#2a2828)"></div>
<svg style="left:1991px;top:815.5px;" width="12" height="9" viewBox="0 0 12 9"><path d="M0 9 L6 0 L12 9 Z" fill="#fff"/></svg>
<svg style="left:1991px;top:832.5px;" width="12" height="9" viewBox="0 0 12 9"><path d="M0 0 L6 9 L12 0 Z" fill="#fff"/></svg>
<div style="left:2007.3px;top:810.5px;width:37px;height:36.5px;border-radius:4px;background:linear-gradient(#3b3939,#2a2828)"></div>
<svg style="left:2016px;top:821px;" width="20" height="20" viewBox="0 0 20 20"><path d="M0 0 H20 L12.0 9.0 V15.600000000000001 L8.0 20 V9.0 Z" fill="#fff"/></svg>
<div style="left:2113px;top:810.5px;width:84.5px;height:36.5px;background:#fff;border-radius:5px"></div>
<div style="left:2263px;top:810.5px;width:118.69999999999982px;height:36.5px;background:#fff;border-radius:5px"></div>
<div style="left:2447px;top:810.5px;width:38.5px;height:36.5px;background:#fff;border-radius:5px"></div>
<div style="left:2492px;top:810.5px;width:5px;height:36.5px;background:linear-gradient(#3b3939,#2a2828);border-radius:4px 0 0 4px"></div>
<div style="left:53px;top:857px;width:2444px;height:46px;background:linear-gradient(#1979d9 0%,#1473d4 55%,#0f6ed0 75%,#0267ce 100%)"></div>
<div style="left:53px;top:903px;width:2444px;height:46px;background:#575757"></div>
<div style="left:53px;top:949px;width:2444px;height:47px;background:#4f4f4f"></div>
<div style="left:53px;top:996px;width:2444px;height:46px;background:#575757"></div>
<div style="left:53px;top:1042px;width:2444px;height:46px;background:#4f4f4f"></div>
<div style="left:53px;top:1088px;width:2444px;height:46px;background:#575757"></div>
<div style="left:173px;top:857px;width:1.4px;height:277px;background:#3a3a3a"></div>
<div style="left:248px;top:857px;width:1.4px;height:277px;background:#3a3a3a"></div>
<div style="left:293px;top:857px;width:1.4px;height:277px;background:#3a3a3a"></div>
<div style="left:383px;top:857px;width:1.4px;height:277px;background:#3a3a3a"></div>
<div style="left:443px;top:857px;width:1.4px;height:277px;background:#3a3a3a"></div>
<div style="left:503px;top:857px;width:1.4px;height:277px;background:#3a3a3a"></div>
<div style="left:563px;top:857px;width:1.4px;height:277px;background:#3a3a3a"></div>
<div style="left:683px;top:857px;width:1.4px;height:277px;background:#3a3a3a"></div>
<div style="left:833px;top:857px;width:1.4px;height:277px;background:#3a3a3a"></div>
<div style="left:983px;top:857px;width:1.4px;height:277px;background:#3a3a3a"></div>
<div style="left:1155px;top:857px;width:1.4px;height:277px;background:#3a3a3a"></div>
<div style="left:1236px;top:857px;width:1.4px;height:277px;background:#3a3a3a"></div>
<div style="left:1356px;top:857px;width:1.4px;height:277px;background:#3a3a3a"></div>
<div style="left:1542px;top:857px;width:1.4px;height:277px;background:#3a3a3a"></div>
<div style="left:1770px;top:857px;width:1.4px;height:277px;background:#3a3a3a"></div>
<div style="left:1965px;top:857px;width:1.4px;height:277px;background:#3a3a3a"></div>
<div style="left:2100px;top:857px;width:1.4px;height:277px;background:#3a3a3a"></div>
<div style="left:2250px;top:857px;width:1.4px;height:277px;background:#3a3a3a"></div>
<div style="left:2435px;top:857px;width:1.4px;height:277px;background:#3a3a3a"></div>
<div style="left:53.3px;top:857px;width:1.1px;height:277px;background:#3a3a3a"></div>
<div style="left:984.5px;top:857px;width:171px;height:46px;box-shadow:inset 0 0 3px 1.5px rgba(255,255,255,.85)"></div>
<svg style="left:101px;top:867.9px;" width="26" height="23" viewBox="0 0 26 23"><rect x="0.7" y="0.7" width="22.6" height="15.8" rx="2" fill="#fff" stroke="#111" stroke-width="1.4"/><path d="M1.5 1.5 L12 9.5 L22.5 1.5 M1.5 15.5 L8.5 7.2 M22.5 15.5 L15.5 7.2" stroke="#111" stroke-width="1.1" fill="none"/><circle cx="17" cy="13.6" r="7" fill="#4cc800"/><path d="M12.8 12.1 H17 V9.4 L21.6 13.6 L17 17.8 V15.1 H12.8 Z" fill="#fff"/></svg>
<svg style="left:199px;top:864.6px;" width="26" height="24" viewBox="0 0 26 24"><path d="M1.5 0 H11 L17 6 V22 Q17 23.4 15.5 23.4 H1.5 Q0 23.4 0 22 V1.5 Q0 0 1.5 0 Z" fill="#fff"/><path d="M11 0 V6 H17 Z" fill="#c8c8c8"/><circle cx="18" cy="11.7" r="6" fill="#2a62d8"/><rect x="17.1" y="10.3" width="1.9" height="5" fill="#dfe8ff"/><circle cx="18" cy="8.3" r="1.1" fill="#dfe8ff"/></svg>
<svg style="left:260px;top:864.3px;" width="24" height="24" viewBox="0 0 24 24"><path d="M4.5 0 L12 7.2 L19.5 0 L24 4.3 L16.6 12 L24 19.7 L19.5 24 L12 16.8 L4.5 24 L0 19.7 L7.4 12 L0 4.3 Z" fill="#9a0000"/><path d="M4.5 0 L12 7.2 L19.5 0 L24 4.3 L20 8.6 Q12 6 3 8 L0 4.3 Z" fill="#a82020" opacity=".7"/></svg>
<svg style="left:326px;top:864.3px;" width="24" height="24" viewBox="0 0 24 24"><circle cx="12" cy="12" r="12" fill="#1670d6"/><rect x="4.75" y="10.0" width="14.5" height="4" fill="#fff"/><rect x="10.0" y="4.75" width="4" height="14.5" fill="#fff"/></svg>
<div style="left:401px;top:864.5px;width:24px;height:31.5px;background:#0873ee"></div>
<svg style="left:401.5px;top:863.8px;" width="23" height="24.4" viewBox="0 0 23 24.4"><path d="M5.7 2 Q5.7 0 7.7 0 H15.3 Q17.3 0 17.3 2 V10.2 H23 L11.5 24.4 L0 10.2 H5.7 Z" fill="#1f86d8"/></svg>
<div style="left:461px;top:864.5px;width:24px;height:31.5px;background:#0873ee"></div>
<svg style="left:461.5px;top:863.8px;" width="23" height="24.4" viewBox="0 0 23 24.4"><path d="M5.7 2 Q5.7 0 7.7 0 H15.3 Q17.3 0 17.3 2 V10.2 H23 L11.5 24.4 L0 10.2 H5.7 Z" fill="#1f86d8"/></svg>
<svg style="left:472.5px;top:875.8px;" width="13" height="13" viewBox="0 0 13 13"><circle cx="6.5" cy="6.5" r="5.9" fill="#2a86f2" stroke="#2f8af2" stroke-width="0.8"/><path d="M6.5 2.5 V6.5" stroke="#5aa6f6" stroke-width="1.1"/><path d="M6.5 6.5 H10.5" stroke="#5aa6f6" stroke-width="1.3"/><path d="M6.5 6.5 L4 9.5" stroke="#5aa6f6" stroke-width="0.9"/></svg>
<svg style="left:521px;top:865.3px;" width="24" height="23.2" viewBox="0 0 24 23.2"><path d="M4.6 0 H14 L20.3 6.3 V21.6 Q20.3 23.2 18.7 23.2 H4.6 Q3 23.2 3 21.6 V1.6 Q3 0 4.6 0 Z" fill="#fff"/><path d="M14 0 V6.3 H20.3 Z" fill="#d0d0d0"/><rect x="0" y="11.8" width="24" height="7.6" rx="1.2" fill="#757575"/><text x="12.2" y="18" text-anchor="middle" font-family="Liberation Sans, sans-serif" font-weight="700" font-size="6.4" fill="#fff" letter-spacing="1.2">LOG</text></svg>
<div style="left:575.5px;top:866px;width:10px;height:29px;background:#0873ee"></div>
<div class="t" style="left:576px;top:869px;font-size:18px;line-height:25px;color:#fff;letter-spacing:-1.02px;">1</div>
<div style="left:694.5px;top:866px;width:51px;height:29px;background:#0873ee"></div>
<div class="t" style="left:695px;top:869px;font-size:18px;line-height:25px;color:#fff;letter-spacing:-0.17px;">Arabic</div>
<div style="left:844.5px;top:866px;width:102px;height:29px;background:#0873ee"></div>
<div class="t" style="left:845px;top:869px;font-size:18px;line-height:25px;color:#fff;letter-spacing:0.15px;">Subtitling #1</div>
<div style="left:995.0px;top:866px;width:25.5px;height:29px;background:#0873ee"></div>
<div class="t" style="left:995.5px;top:869px;font-size:18px;line-height:25px;color:#fff;letter-spacing:-1.25px;">QC</div>
<svg style="left:1184px;top:864.7px;" width="24" height="23.2" viewBox="0 0 24 23.2"><path d="M4.6 0 H14 L20.3 6.3 V21.6 Q20.3 23.2 18.7 23.2 H4.6 Q3 23.2 3 21.6 V1.6 Q3 0 4.6 0 Z" fill="#fff"/><path d="M14 0 V6.3 H20.3 Z" fill="#d0d0d0"/><rect x="0" y="11.8" width="24" height="7.6" rx="1.2" fill="#a010c0"/><text x="12.2" y="18" text-anchor="middle" font-family="Liberation Sans, sans-serif" font-weight="700" font-size="6.2" fill="#fff" letter-spacing="0.9">MP4</text></svg>
<div class="t" style="left:1248.8px;top:869px;font-size:18px;line-height:25px;color:#fff;letter-spacing:-0.44px;">MP4</div>
<div class="t" style="left:1368.7px;top:869px;font-size:18px;line-height:25px;color:#fff;">Final file for client</div>
<div class="t" style="left:1555px;top:869px;font-size:18px;line-height:25px;color:#fff;">Final file for client</div>
<div class="t" style="left:1782.5px;top:869px;font-size:18px;line-height:25px;color:#fff;letter-spacing:-0.09px;">20/09/2022 12:19</div>
<div class="t" style="left:1978.7px;top:869px;font-size:18px;line-height:25px;color:#fff;letter-spacing:-0.49px;">11,954</div>
<div class="t" style="left:2112.5px;top:869px;font-size:18px;line-height:25px;color:#fff;letter-spacing:-0.21px;">Andrew Garb</div>
<div class="t" style="left:2447px;top:869px;font-size:18px;line-height:25px;color:#fff;width:49px;overflow:hidden">Andrew corp</div>
<svg style="left:101px;top:913.9px;" width="26" height="23" viewBox="0 0 26 23"><rect x="0.7" y="0.7" width="22.6" height="15.8" rx="2" fill="#fff" stroke="#111" stroke-width="1.4"/><path d="M1.5 1.5 L12 9.5 L22.5 1.5 M1.5 15.5 L8.5 7.2 M22.5 15.5 L15.5 7.2" stroke="#111" stroke-width="1.1" fill="none"/><circle cx="17" cy="13.6" r="7" fill="#4cc800"/><path d="M12.8 12.1 H17 V9.4 L21.6 13.6 L17 17.8 V15.1 H12.8 Z" fill="#fff"/></svg>
<svg style="left:199px;top:910.6px;" width="26" height="24" viewBox="0 0 26 24"><path d="M1.5 0 H11 L17 6 V22 Q17 23.4 15.5 23.4 H1.5 Q0 23.4 0 22 V1.5 Q0 0 1.5 0 Z" fill="#fff"/><path d="M11 0 V6 H17 Z" fill="#c8c8c8"/><circle cx="18" cy="11.7" r="6" fill="#2a62d8"/><rect x="17.1" y="10.3" width="1.9" height="5" fill="#dfe8ff"/><circle cx="18" cy="8.3" r="1.1" fill="#dfe8ff"/></svg>
<svg style="left:260px;top:910.3px;" width="24" height="24" viewBox="0 0 24 24"><path d="M4.5 0 L12 7.2 L19.5 0 L24 4.3 L16.6 12 L24 19.7 L19.5 24 L12 16.8 L4.5 24 L0 19.7 L7.4 12 L0 4.3 Z" fill="#9a0000"/><path d="M4.5 0 L12 7.2 L19.5 0 L24 4.3 L20 8.6 Q12 6 3 8 L0 4.3 Z" fill="#a82020" opacity=".7"/></svg>
<svg style="left:326px;top:910.3px;" width="24" height="24" viewBox="0 0 24 24"><circle cx="12" cy="12" r="12" fill="#0a66d8"/><rect x="4.75" y="10.0" width="14.5" height="4" fill="#fff"/><rect x="10.0" y="4.75" width="4" height="14.5" fill="#fff"/></svg>
<svg style="left:401.5px;top:909.9px;" width="23" height="24.4" viewBox="0 0 23 24.4"><path d="M5.7 2 Q5.7 0 7.7 0 H15.3 Q17.3 0 17.3 2 V10.2 H23 L11.5 24.4 L0 10.2 H5.7 Z" fill="#98cc10"/></svg>
<svg style="left:461.5px;top:909.9px;" width="23" height="24.4" viewBox="0 0 23 24.4"><path d="M5.7 2 Q5.7 0 7.7 0 H15.3 Q17.3 0 17.3 2 V10.2 H23 L11.5 24.4 L0 10.2 H5.7 Z" fill="#98cc10"/></svg>
<svg style="left:472.5px;top:921.9px;" width="13" height="13" viewBox="0 0 13 13"><circle cx="6.5" cy="6.5" r="5.9" fill="#fff" stroke="#cfcfcf" stroke-width="0.8"/><path d="M6.5 2.5 V6.5" stroke="#444" stroke-width="1.1"/><path d="M6.5 6.5 H10.5" stroke="#3aa0e0" stroke-width="1.3"/><path d="M6.5 6.5 L4 9.5" stroke="#e0a030" stroke-width="0.9"/></svg>
<svg style="left:521px;top:911.3px;" width="24" height="23.2" viewBox="0 0 24 23.2"><path d="M4.6 0 H14 L20.3 6.3 V21.6 Q20.3 23.2 18.7 23.2 H4.6 Q3 23.2 3 21.6 V1.6 Q3 0 4.6 0 Z" fill="#fff"/><path d="M14 0 V6.3 H20.3 Z" fill="#d0d0d0"/><rect x="0" y="11.8" width="24" height="7.6" rx="1.2" fill="#757575"/><text x="12.2" y="18" text-anchor="middle" font-family="Liberation Sans, sans-serif" font-weight="700" font-size="6.4" fill="#fff" letter-spacing="1.2">LOG</text></svg>
<div class="t" style="left:576px;top:915px;font-size:18px;line-height:25px;color:#fff;letter-spacing:-1.02px;">1</div>
<div class="t" style="left:695px;top:915px;font-size:18px;line-height:25px;color:#fff;letter-spacing:-0.51px;">Spanish</div>
<div class="t" style="left:845px;top:915px;font-size:18px;line-height:25px;color:#fff;letter-spacing:0.15px;">Subtitling #1</div>
<div class="t" style="left:995.5px;top:915px;font-size:18px;line-height:25px;color:#fff;letter-spacing:-1.25px;">QC</div>
<svg style="left:1184px;top:910.7px;" width="24" height="23.2" viewBox="0 0 24 23.2"><path d="M4.6 0 H14 L20.3 6.3 V21.6 Q20.3 23.2 18.7 23.2 H4.6 Q3 23.2 3 21.6 V1.6 Q3 0 4.6 0 Z" fill="#fff"/><path d="M14 0 V6.3 H20.3 Z" fill="#d0d0d0"/><rect x="0" y="11.8" width="24" height="7.6" rx="1.2" fill="#a010c0"/><text x="12.2" y="18" text-anchor="middle" font-family="Liberation Sans, sans-serif" font-weight="700" font-size="6.2" fill="#fff" letter-spacing="0.9">MP4</text></svg>
<div class="t" style="left:1248.8px;top:915px;font-size:18px;line-height:25px;color:#fff;letter-spacing:-0.44px;">MP4</div>
<div class="t" style="left:1368.7px;top:915px;font-size:18px;line-height:25px;color:#fff;">Final file for client</div>
<div class="t" style="left:1555px;top:915px;font-size:18px;line-height:25px;color:#fff;">Final file for client</div>
<div class="t" style="left:1782.5px;top:915px;font-size:18px;line-height:25px;color:#fff;letter-spacing:-0.09px;">19/09/2022 09:36</div>
<div class="t" style="left:1978.7px;top:915px;font-size:18px;line-height:25px;color:#fff;letter-spacing:-0.49px;">11,954</div>
<div class="t" style="left:2112.5px;top:915px;font-size:18px;line-height:25px;color:#fff;letter-spacing:-0.21px;">Andrew Garb</div>
<div class="t" style="left:2447px;top:915px;font-size:18px;line-height:25px;color:#fff;width:49px;overflow:hidden">Andrew corp</div>
<svg style="left:101px;top:959.9px;" width="26" height="23" viewBox="0 0 26 23"><rect x="0.7" y="0.7" width="22.6" height="15.8" rx="2" fill="#fff" stroke="#111" stroke-width="1.4"/><path d="M1.5 1.5 L12 9.5 L22.5 1.5 M1.5 15.5 L8.5 7.2 M22.5 15.5 L15.5 7.2" stroke="#111" stroke-width="1.1" fill="none"/><circle cx="17" cy="13.6" r="7" fill="#ababab"/><path d="M12.8 12.1 H17 V9.4 L21.6 13.6 L17 17.8 V15.1 H12.8 Z" fill="#fff"/></svg>
<svg style="left:199px;top:956.6px;" width="26" height="24" viewBox="0 0 26 24"><path d="M1.5 0 H11 L17 6 V22 Q17 23.4 15.5 23.4 H1.5 Q0 23.4 0 22 V1.5 Q0 0 1.5 0 Z" fill="#fff"/><path d="M11 0 V6 H17 Z" fill="#c8c8c8"/><circle cx="18" cy="11.7" r="6" fill="#2a62d8"/><rect x="17.1" y="10.3" width="1.9" height="5" fill="#dfe8ff"/><circle cx="18" cy="8.3" r="1.1" fill="#dfe8ff"/></svg>
<svg style="left:260px;top:956.3px;" width="24" height="24" viewBox="0 0 24 24"><path d="M4.5 0 L12 7.2 L19.5 0 L24 4.3 L16.6 12 L24 19.7 L19.5 24 L12 16.8 L4.5 24 L0 19.7 L7.4 12 L0 4.3 Z" fill="#9a0000"/><path d="M4.5 0 L12 7.2 L19.5 0 L24 4.3 L20 8.6 Q12 6 3 8 L0 4.3 Z" fill="#a82020" opacity=".7"/></svg>
<svg style="left:326px;top:956.3px;" width="24" height="24" viewBox="0 0 24 24"><circle cx="12" cy="12" r="12" fill="#0a66d8"/><rect x="4.75" y="10.0" width="14.5" height="4" fill="#fff"/><rect x="10.0" y="4.75" width="4" height="14.5" fill="#fff"/></svg>
<svg style="left:401.5px;top:955.9px;" width="23" height="24.4" viewBox="0 0 23 24.4"><path d="M5.7 2 Q5.7 0 7.7 0 H15.3 Q17.3 0 17.3 2 V10.2 H23 L11.5 24.4 L0 10.2 H5.7 Z" fill="#98cc10"/></svg>
<svg style="left:461.5px;top:955.9px;" width="23" height="24.4" viewBox="0 0 23 24.4"><path d="M5.7 2 Q5.7 0 7.7 0 H15.3 Q17.3 0 17.3 2 V10.2 H23 L11.5 24.4 L0 10.2 H5.7 Z" fill="#98cc10"/></svg>
<svg style="left:472.5px;top:967.9px;" width="13" height="13" viewBox="0 0 13 13"><circle cx="6.5" cy="6.5" r="5.9" fill="#fff" stroke="#cfcfcf" stroke-width="0.8"/><path d="M6.5 2.5 V6.5" stroke="#444" stroke-width="1.1"/><path d="M6.5 6.5 H10.5" stroke="#3aa0e0" stroke-width="1.3"/><path d="M6.5 6.5 L4 9.5" stroke="#e0a030" stroke-width="0.9"/></svg>
<svg style="left:521px;top:957.3px;" width="24" height="23.2" viewBox="0 0 24 23.2"><path d="M4.6 0 H14 L20.3 6.3 V21.6 Q20.3 23.2 18.7 23.2 H4.6 Q3 23.2 3 21.6 V1.6 Q3 0 4.6 0 Z" fill="#fff"/><path d="M14 0 V6.3 H20.3 Z" fill="#d0d0d0"/><rect x="0" y="11.8" width="24" height="7.6" rx="1.2" fill="#757575"/><text x="12.2" y="18" text-anchor="middle" font-family="Liberation Sans, sans-serif" font-weight="700" font-size="6.4" fill="#fff" letter-spacing="1.2">LOG</text></svg>
<div class="t" style="left:576px;top:961px;font-size:18px;line-height:25px;color:#fff;letter-spacing:-1.02px;">1</div>
<svg style="left:1184px;top:956.7px;" width="24" height="23.2" viewBox="0 0 24 23.2"><path d="M4.6 0 H14 L20.3 6.3 V21.6 Q20.3 23.2 18.7 23.2 H4.6 Q3 23.2 3 21.6 V1.6 Q3 0 4.6 0 Z" fill="#fff"/><path d="M14 0 V6.3 H20.3 Z" fill="#d0d0d0"/><rect x="0" y="11.8" width="24" height="7.6" rx="1.2" fill="#3090e0"/><text x="12.2" y="18" text-anchor="middle" font-family="Liberation Sans, sans-serif" font-weight="700" font-size="6.2" fill="#fff" letter-spacing="0.9">STL</text></svg>
<div class="t" style="left:1248.8px;top:961px;font-size:18px;line-height:25px;color:#fff;letter-spacing:-0.44px;">STL</div>
<div class="t" style="left:1368.7px;top:961px;font-size:18px;line-height:25px;color:#fff;letter-spacing:-0.29px;">Script</div>
<div class="t" style="left:1782.5px;top:961px;font-size:18px;line-height:25px;color:#fff;letter-spacing:-0.09px;">25/08/2022 17:13</div>
<div class="t" style="left:1978.7px;top:961px;font-size:18px;line-height:25px;color:#fff;letter-spacing:-0.49px;">110,080</div>
<div class="t" style="left:2112.5px;top:961px;font-size:18px;line-height:25px;color:#fff;letter-spacing:-0.25px;">Alex</div>
<div class="t" style="left:2447px;top:961px;font-size:18px;line-height:25px;color:#fff;width:49px;overflow:hidden">Andrew corp</div>
<svg style="left:101px;top:1006.9px;" width="26" height="23" viewBox="0 0 26 23"><rect x="0.7" y="0.7" width="22.6" height="15.8" rx="2" fill="#fff" stroke="#111" stroke-width="1.4"/><path d="M1.5 1.5 L12 9.5 L22.5 1.5 M1.5 15.5 L8.5 7.2 M22.5 15.5 L15.5 7.2" stroke="#111" stroke-width="1.1" fill="none"/><circle cx="17" cy="13.6" r="7" fill="#4cc800"/><path d="M12.8 12.1 H17 V9.4 L21.6 13.6 L17 17.8 V15.1 H12.8 Z" fill="#fff"/></svg>
<svg style="left:199px;top:1003.6px;" width="26" height="24" viewBox="0 0 26 24"><path d="M1.5 0 H11 L17 6 V22 Q17 23.4 15.5 23.4 H1.5 Q0 23.4 0 22 V1.5 Q0 0 1.5 0 Z" fill="#fff"/><path d="M11 0 V6 H17 Z" fill="#c8c8c8"/><circle cx="18" cy="11.7" r="6" fill="#2a62d8"/><rect x="17.1" y="10.3" width="1.9" height="5" fill="#dfe8ff"/><circle cx="18" cy="8.3" r="1.1" fill="#dfe8ff"/></svg>
<svg style="left:260px;top:1003.3px;" width="24" height="24" viewBox="0 0 24 24"><path d="M4.5 0 L12 7.2 L19.5 0 L24 4.3 L16.6 12 L24 19.7 L19.5 24 L12 16.8 L4.5 24 L0 19.7 L7.4 12 L0 4.3 Z" fill="#9a0000"/><path d="M4.5 0 L12 7.2 L19.5 0 L24 4.3 L20 8.6 Q12 6 3 8 L0 4.3 Z" fill="#a82020" opacity=".7"/></svg>
<svg style="left:326px;top:1003.3px;" width="24" height="24" viewBox="0 0 24 24"><circle cx="12" cy="12" r="12" fill="#0a66d8"/><rect x="4.75" y="10.0" width="14.5" height="4" fill="#fff"/><rect x="10.0" y="4.75" width="4" height="14.5" fill="#fff"/></svg>
<svg style="left:401.5px;top:1002.9px;" width="23" height="24.4" viewBox="0 0 23 24.4"><path d="M5.7 2 Q5.7 0 7.7 0 H15.3 Q17.3 0 17.3 2 V10.2 H23 L11.5 24.4 L0 10.2 H5.7 Z" fill="#98cc10"/></svg>
<svg style="left:461.5px;top:1002.9px;" width="23" height="24.4" viewBox="0 0 23 24.4"><path d="M5.7 2 Q5.7 0 7.7 0 H15.3 Q17.3 0 17.3 2 V10.2 H23 L11.5 24.4 L0 10.2 H5.7 Z" fill="#98cc10"/></svg>
<svg style="left:472.5px;top:1014.9px;" width="13" height="13" viewBox="0 0 13 13"><circle cx="6.5" cy="6.5" r="5.9" fill="#fff" stroke="#cfcfcf" stroke-width="0.8"/><path d="M6.5 2.5 V6.5" stroke="#444" stroke-width="1.1"/><path d="M6.5 6.5 H10.5" stroke="#3aa0e0" stroke-width="1.3"/><path d="M6.5 6.5 L4 9.5" stroke="#e0a030" stroke-width="0.9"/></svg>
<svg style="left:521px;top:1004.3px;" width="24" height="23.2" viewBox="0 0 24 23.2"><path d="M4.6 0 H14 L20.3 6.3 V21.6 Q20.3 23.2 18.7 23.2 H4.6 Q3 23.2 3 21.6 V1.6 Q3 0 4.6 0 Z" fill="#fff"/><path d="M14 0 V6.3 H20.3 Z" fill="#d0d0d0"/><rect x="0" y="11.8" width="24" height="7.6" rx="1.2" fill="#757575"/><text x="12.2" y="18" text-anchor="middle" font-family="Liberation Sans, sans-serif" font-weight="700" font-size="6.4" fill="#fff" letter-spacing="1.2">LOG</text></svg>
<div class="t" style="left:576px;top:1008px;font-size:18px;line-height:25px;color:#fff;letter-spacing:-1.02px;">1</div>
<div class="t" style="left:695px;top:1008px;font-size:18px;line-height:25px;color:#fff;letter-spacing:0.10px;">Pre production</div>
<div class="t" style="left:995.5px;top:1008px;font-size:18px;line-height:25px;color:#fff;">Upload script</div>
<svg style="left:1184px;top:1003.7px;" width="24" height="23.2" viewBox="0 0 24 23.2"><path d="M4.6 0 H14 L20.3 6.3 V21.6 Q20.3 23.2 18.7 23.2 H4.6 Q3 23.2 3 21.6 V1.6 Q3 0 4.6 0 Z" fill="#fff"/><path d="M14 0 V6.3 H20.3 Z" fill="#d0d0d0"/><rect x="0" y="11.8" width="24" height="7.6" rx="1.2" fill="#3090e0"/><text x="12.2" y="18" text-anchor="middle" font-family="Liberation Sans, sans-serif" font-weight="700" font-size="5.6" fill="#fff" letter-spacing="0.1">DOCX</text></svg>
<div class="t" style="left:1248.8px;top:1008px;font-size:18px;line-height:25px;color:#fff;letter-spacing:-0.95px;">DOCX</div>
<div class="t" style="left:1368.7px;top:1008px;font-size:18px;line-height:25px;color:#fff;letter-spacing:-0.29px;">Script</div>
<div class="t" style="left:1555px;top:1008px;font-size:18px;line-height:25px;color:#fff;letter-spacing:-0.25px;">Script</div>
<div class="t" style="left:1782.5px;top:1008px;font-size:18px;line-height:25px;color:#fff;letter-spacing:-0.09px;">25/08/2022 08:16</div>
<div class="t" style="left:1978.7px;top:1008px;font-size:18px;line-height:25px;color:#fff;letter-spacing:-0.49px;">11,954</div>
<div class="t" style="left:2112.5px;top:1008px;font-size:18px;line-height:25px;color:#fff;letter-spacing:-0.21px;">Andrew Garb</div>
<div class="t" style="left:2447px;top:1008px;font-size:18px;line-height:25px;color:#fff;width:49px;overflow:hidden">Andrew corp</div>
<svg style="left:101px;top:1052.9px;" width="26" height="23" viewBox="0 0 26 23"><rect x="0.7" y="0.7" width="22.6" height="15.8" rx="2" fill="#fff" stroke="#111" stroke-width="1.4"/><path d="M1.5 1.5 L12 9.5 L22.5 1.5 M1.5 15.5 L8.5 7.2 M22.5 15.5 L15.5 7.2" stroke="#111" stroke-width="1.1" fill="none"/><circle cx="17" cy="13.6" r="7" fill="#ababab"/><path d="M12.8 12.1 H17 V9.4 L21.6 13.6 L17 17.8 V15.1 H12.8 Z" fill="#fff"/></svg>
<svg style="left:199px;top:1049.6px;" width="26" height="24" viewBox="0 0 26 24"><path d="M1.5 0 H11 L17 6 V22 Q17 23.4 15.5 23.4 H1.5 Q0 23.4 0 22 V1.5 Q0 0 1.5 0 Z" fill="#fff"/><path d="M11 0 V6 H17 Z" fill="#c8c8c8"/><circle cx="18" cy="11.7" r="6" fill="#2a62d8"/><rect x="17.1" y="10.3" width="1.9" height="5" fill="#dfe8ff"/><circle cx="18" cy="8.3" r="1.1" fill="#dfe8ff"/></svg>
<svg style="left:260px;top:1049.3px;" width="24" height="24" viewBox="0 0 24 24"><path d="M4.5 0 L12 7.2 L19.5 0 L24 4.3 L16.6 12 L24 19.7 L19.5 24 L12 16.8 L4.5 24 L0 19.7 L7.4 12 L0 4.3 Z" fill="#9a0000"/><path d="M4.5 0 L12 7.2 L19.5 0 L24 4.3 L20 8.6 Q12 6 3 8 L0 4.3 Z" fill="#a82020" opacity=".7"/></svg>
<svg style="left:326px;top:1049.3px;" width="24" height="24" viewBox="0 0 24 24"><circle cx="12" cy="12" r="12" fill="#0a66d8"/><rect x="4.75" y="10.0" width="14.5" height="4" fill="#fff"/><rect x="10.0" y="4.75" width="4" height="14.5" fill="#fff"/></svg>
<svg style="left:401.5px;top:1048.9px;" width="23" height="24.4" viewBox="0 0 23 24.4"><path d="M5.7 2 Q5.7 0 7.7 0 H15.3 Q17.3 0 17.3 2 V10.2 H23 L11.5 24.4 L0 10.2 H5.7 Z" fill="#b3b3b3"/></svg>
<svg style="left:461.5px;top:1048.9px;" width="23" height="24.4" viewBox="0 0 23 24.4"><path d="M5.7 2 Q5.7 0 7.7 0 H15.3 Q17.3 0 17.3 2 V10.2 H23 L11.5 24.4 L0 10.2 H5.7 Z" fill="#b3b3b3"/></svg>
<svg style="left:472.5px;top:1060.9px;" width="13" height="13" viewBox="0 0 13 13"><circle cx="6.5" cy="6.5" r="5.9" fill="#fff" stroke="#cfcfcf" stroke-width="0.8"/><path d="M6.5 2.5 V6.5" stroke="#444" stroke-width="1.1"/><path d="M6.5 6.5 H10.5" stroke="#3aa0e0" stroke-width="1.3"/><path d="M6.5 6.5 L4 9.5" stroke="#e0a030" stroke-width="0.9"/></svg>
<svg style="left:521px;top:1050.3px;" width="24" height="23.2" viewBox="0 0 24 23.2"><path d="M4.6 0 H14 L20.3 6.3 V21.6 Q20.3 23.2 18.7 23.2 H4.6 Q3 23.2 3 21.6 V1.6 Q3 0 4.6 0 Z" fill="#fff"/><path d="M14 0 V6.3 H20.3 Z" fill="#d0d0d0"/><rect x="0" y="11.8" width="24" height="7.6" rx="1.2" fill="#757575"/><text x="12.2" y="18" text-anchor="middle" font-family="Liberation Sans, sans-serif" font-weight="700" font-size="6.4" fill="#fff" letter-spacing="1.2">LOG</text></svg>
<div class="t" style="left:576px;top:1054px;font-size:18px;line-height:25px;color:#fff;letter-spacing:-1.02px;">1</div>
<div class="t" style="left:695px;top:1054px;font-size:18px;line-height:25px;color:#fff;letter-spacing:-0.17px;">Arabic</div>
<div class="t" style="left:845px;top:1054px;font-size:18px;line-height:25px;color:#fff;letter-spacing:0.15px;">Subtitling #1</div>
<div class="t" style="left:995.5px;top:1054px;font-size:18px;line-height:25px;color:#fff;letter-spacing:0.11px;">Timing</div>
<svg style="left:1184px;top:1049.7px;" width="24" height="23.2" viewBox="0 0 24 23.2"><path d="M4.6 0 H14 L20.3 6.3 V21.6 Q20.3 23.2 18.7 23.2 H4.6 Q3 23.2 3 21.6 V1.6 Q3 0 4.6 0 Z" fill="#fff"/><path d="M14 0 V6.3 H20.3 Z" fill="#d0d0d0"/><rect x="0" y="11.8" width="24" height="7.6" rx="1.2" fill="#3090e0"/><text x="12.2" y="18" text-anchor="middle" font-family="Liberation Sans, sans-serif" font-weight="700" font-size="6.2" fill="#fff" letter-spacing="0.9">890</text></svg>
<div class="t" style="left:1248.8px;top:1054px;font-size:18px;line-height:25px;color:#fff;letter-spacing:-0.45px;">890</div>
<div class="t" style="left:1368.7px;top:1054px;font-size:18px;line-height:25px;color:#fff;letter-spacing:0.06px;">Subtitle file</div>
<div class="t" style="left:1555px;top:1054px;font-size:18px;line-height:25px;color:#fff;letter-spacing:0.07px;">Subtitle file</div>
<div class="t" style="left:1782.5px;top:1054px;font-size:18px;line-height:25px;color:#fff;letter-spacing:-0.09px;">16/08/2022 13:16</div>
<div class="t" style="left:1978.7px;top:1054px;font-size:18px;line-height:25px;color:#fff;letter-spacing:-0.71px;">61,952</div>
<div class="t" style="left:2112.5px;top:1054px;font-size:18px;line-height:25px;color:#fff;letter-spacing:-0.50px;">Maya</div>
<div class="t" style="left:2447px;top:1054px;font-size:18px;line-height:25px;color:#fff;width:49px;overflow:hidden">Andrew corp</div>
<svg style="left:101px;top:1098.1px;" width="26" height="23" viewBox="0 0 26 23"><rect x="0.7" y="0.7" width="22.6" height="15.8" rx="2" fill="#fff" stroke="#111" stroke-width="1.4"/><path d="M1.5 1.5 L12 9.5 L22.5 1.5 M1.5 15.5 L8.5 7.2 M22.5 15.5 L15.5 7.2" stroke="#111" stroke-width="1.1" fill="none"/><circle cx="17" cy="13.6" r="7" fill="#ababab"/><path d="M12.8 12.1 H17 V9.4 L21.6 13.6 L17 17.8 V15.1 H12.8 Z" fill="#fff"/></svg>
<svg style="left:199px;top:1094.8px;" width="26" height="24" viewBox="0 0 26 24"><path d="M1.5 0 H11 L17 6 V22 Q17 23.4 15.5 23.4 H1.5 Q0 23.4 0 22 V1.5 Q0 0 1.5 0 Z" fill="#fff"/><path d="M11 0 V6 H17 Z" fill="#c8c8c8"/><circle cx="18" cy="11.7" r="6" fill="#2a62d8"/><rect x="17.1" y="10.3" width="1.9" height="5" fill="#dfe8ff"/><circle cx="18" cy="8.3" r="1.1" fill="#dfe8ff"/></svg>
<svg style="left:260px;top:1094.5px;" width="24" height="24" viewBox="0 0 24 24"><path d="M4.5 0 L12 7.2 L19.5 0 L24 4.3 L16.6 12 L24 19.7 L19.5 24 L12 16.8 L4.5 24 L0 19.7 L7.4 12 L0 4.3 Z" fill="#9a0000"/><path d="M4.5 0 L12 7.2 L19.5 0 L24 4.3 L20 8.6 Q12 6 3 8 L0 4.3 Z" fill="#a82020" opacity=".7"/></svg>
<svg style="left:326px;top:1094.5px;" width="24" height="24" viewBox="0 0 24 24"><circle cx="12" cy="12" r="12" fill="#0a66d8"/><rect x="4.75" y="10.0" width="14.5" height="4" fill="#fff"/><rect x="10.0" y="4.75" width="4" height="14.5" fill="#fff"/></svg>
<svg style="left:401.5px;top:1094.1px;" width="23" height="24.4" viewBox="0 0 23 24.4"><path d="M5.7 2 Q5.7 0 7.7 0 H15.3 Q17.3 0 17.3 2 V10.2 H23 L11.5 24.4 L0 10.2 H5.7 Z" fill="#b3b3b3"/></svg>
<svg style="left:461.5px;top:1094.1px;" width="23" height="24.4" viewBox="0 0 23 24.4"><path d="M5.7 2 Q5.7 0 7.7 0 H15.3 Q17.3 0 17.3 2 V10.2 H23 L11.5 24.4 L0 10.2 H5.7 Z" fill="#b3b3b3"/></svg>
<svg style="left:472.5px;top:1106.1px;" width="13" height="13" viewBox="0 0 13 13"><circle cx="6.5" cy="6.5" r="5.9" fill="#fff" stroke="#cfcfcf" stroke-width="0.8"/><path d="M6.5 2.5 V6.5" stroke="#444" stroke-width="1.1"/><path d="M6.5 6.5 H10.5" stroke="#3aa0e0" stroke-width="1.3"/><path d="M6.5 6.5 L4 9.5" stroke="#e0a030" stroke-width="0.9"/></svg>
<svg style="left:521px;top:1095.5px;" width="24" height="23.2" viewBox="0 0 24 23.2"><path d="M4.6 0 H14 L20.3 6.3 V21.6 Q20.3 23.2 18.7 23.2 H4.6 Q3 23.2 3 21.6 V1.6 Q3 0 4.6 0 Z" fill="#fff"/><path d="M14 0 V6.3 H20.3 Z" fill="#d0d0d0"/><rect x="0" y="11.8" width="24" height="7.6" rx="1.2" fill="#757575"/><text x="12.2" y="18" text-anchor="middle" font-family="Liberation Sans, sans-serif" font-weight="700" font-size="6.4" fill="#fff" letter-spacing="1.2">LOG</text></svg>
<div class="t" style="left:576px;top:1099px;font-size:18px;line-height:25px;color:#fff;letter-spacing:-1.02px;">1</div>
<div class="t" style="left:695px;top:1099px;font-size:18px;line-height:25px;color:#fff;letter-spacing:-0.17px;">Arabic</div>
<div class="t" style="left:845px;top:1099px;font-size:18px;line-height:25px;color:#fff;letter-spacing:0.15px;">Subtitling #1</div>
<div class="t" style="left:995.5px;top:1099px;font-size:18px;line-height:25px;color:#fff;letter-spacing:-0.26px;">Translation</div>
<svg style="left:1184px;top:1094.9px;" width="24" height="23.2" viewBox="0 0 24 23.2"><path d="M4.6 0 H14 L20.3 6.3 V21.6 Q20.3 23.2 18.7 23.2 H4.6 Q3 23.2 3 21.6 V1.6 Q3 0 4.6 0 Z" fill="#fff"/><path d="M14 0 V6.3 H20.3 Z" fill="#d0d0d0"/><rect x="0" y="11.8" width="24" height="7.6" rx="1.2" fill="#3090e0"/><text x="12.2" y="18" text-anchor="middle" font-family="Liberation Sans, sans-serif" font-weight="700" font-size="5.6" fill="#fff" letter-spacing="0.1">DOCX</text></svg>
<div class="t" style="left:1248.8px;top:1099px;font-size:18px;line-height:25px;color:#fff;letter-spacing:-0.95px;">DOCX</div>
<div class="t" style="left:1368.7px;top:1099px;font-size:18px;line-height:25px;color:#fff;letter-spacing:0.06px;">Subtitle file</div>
<div class="t" style="left:1555px;top:1099px;font-size:18px;line-height:25px;color:#fff;letter-spacing:0.07px;">Subtitle file</div>
<div class="t" style="left:1782.5px;top:1099px;font-size:18px;line-height:25px;color:#fff;letter-spacing:-0.09px;">16/08/2022 13:15</div>
<div class="t" style="left:1978.7px;top:1099px;font-size:18px;line-height:25px;color:#fff;letter-spacing:-0.49px;">11,954</div>
<div class="t" style="left:2112.5px;top:1099px;font-size:18px;line-height:25px;color:#fff;letter-spacing:-0.50px;">Maya</div>
<div class="t" style="left:2447px;top:1099px;font-size:18px;line-height:25px;color:#fff;width:49px;overflow:hidden">Andrew corp</div>
<div style="left:47px;top:1178px;width:109px;height:51.5px;border-radius:5px;border:1px solid #1f1d1d;background:linear-gradient(#413f3f 0%,#363434 46%,#2a2828 54%,#242222 100%)"></div>
<svg style="left:60.5px;top:1185.5px;" width="34" height="34" viewBox="0 0 34 34"><circle cx="17" cy="17" r="14.3" fill="none" stroke="#e23030" stroke-width="5.2"/><path d="M7 7 L27 27" stroke="#e23030" stroke-width="5.2"/></svg>
<div class="t" style="left:98.7px;top:1191px;font-size:18px;line-height:25px;color:#fff;letter-spacing:-0.55px;">Close</div>
<div style="left:203px;top:1165px;width:2298.5px;height:77px;border-radius:5px;background:#272424"></div>
<div class="t" style="left:683px;top:1171px;font-size:18px;line-height:25px;color:#fff;letter-spacing:-0.25px;">Customer: </div>
<div class="t" style="left:768.5px;top:1171px;font-size:18px;line-height:25px;color:#fff;font-weight:700;letter-spacing:-0.14px;">Andrew corp</div>
<div class="t" style="left:897.5px;top:1171px;font-size:18px;line-height:25px;color:#fff;letter-spacing:-0.12px;">Title: </div>
<div class="t" style="left:940px;top:1171px;font-size:18px;line-height:25px;color:#fff;font-weight:700;letter-spacing:-0.11px;">Little House On the Prairie</div>
<div class="t" style="left:1183px;top:1171px;font-size:18px;line-height:25px;color:#fff;letter-spacing:-0.63px;">Series: </div>
<div class="t" style="left:1239px;top:1171px;font-size:18px;line-height:25px;color:#fff;font-weight:700;letter-spacing:0.15px;">666</div>
<div class="t" style="left:1289px;top:1171px;font-size:18px;line-height:25px;color:#fff;letter-spacing:-0.19px;">Script: </div>
<div class="t" style="left:1343.5px;top:1171px;font-size:18px;line-height:25px;color:#fff;font-weight:700;">Waiting for script</div>
<div class="t" style="left:1511px;top:1171px;font-size:18px;line-height:25px;color:#fff;letter-spacing:-0.24px;">Source language: </div>
<div class="t" style="left:1653px;top:1171px;font-size:18px;line-height:25px;color:#fff;font-weight:700;letter-spacing:-0.72px;">English</div>
<div class="t" style="left:1733px;top:1171px;font-size:18px;line-height:25px;color:#fff;letter-spacing:-0.23px;">Target languages: </div>
<div class="t" style="left:1877px;top:1171px;font-size:18px;line-height:25px;color:#fff;font-weight:700;letter-spacing:-0.47px;">Arabic,Spanish</div>
<div class="t" style="left:1089.8px;top:1231px;font-size:15px;line-height:21px;color:#fff;letter-spacing:-0.05px;text-shadow:0 0 2px #000">Copyright © 2012 </div>
<div class="t" style="left:1211.7px;top:1231px;font-size:15px;line-height:21px;color:#707174;"><span style="color:#7e8085;font-style:italic;letter-spacing:-2.1px">O</span><span style="color:#f5b81c;font-style:italic;letter-spacing:-2.1px">O</span><span style="color:#2bb5e8;font-style:italic;letter-spacing:-2.1px">O</span><span style="color:#707174;margin-left:1.5px">NA.NET</span></div>
<div class="t" style="left:1299.8px;top:1231px;font-size:15px;line-height:21px;color:#fff;letter-spacing:-0.03px;text-shadow:0 0 2px #000">ltd. All rights reserved.</div>
<div style="left:495px;top:357.5px;width:71.5px;height:63.0px;border:5px solid #00fa46;border-radius:7px"></div>
<div style="left:573.6999999999999px;top:368.79999999999995px;width:31.2px;height:31.2px;border-radius:50%;background:#00f53c"></div>
<div class="t" style="left:573.6999999999999px;top:373px;font-size:22px;line-height:26px;color:#000;font-weight:700;width:31.2px;text-align:center;">1</div>
<div style="left:1159.5px;top:901.5px;width:607.5px;height:148.5px;border:5px solid #00fa46;border-radius:7px"></div>
<div style="left:1772.9px;top:949.4px;width:31.2px;height:31.2px;border-radius:50%;background:#00f53c"></div>
<div class="t" style="left:1772.9px;top:953px;font-size:22px;line-height:26px;color:#000;font-weight:700;width:31.2px;text-align:center;">2</div>
<div style="left:381px;top:899.5px;width:69.5px;height:147.5px;border:5px solid #00fa46;border-radius:7px"></div>
<div style="left:340.4px;top:953.4px;width:31.2px;height:31.2px;border-radius:50%;background:#00f53c"></div>
<div class="t" style="left:340.4px;top:957px;font-size:22px;line-height:26px;color:#000;font-weight:700;width:31.2px;text-align:center;">3</div>
<svg style="left:1322px;top:584px;" width="20" height="30" viewBox="0 0 20 30"><path d="M1.2 1 V24.6 L6.5 19.8 L10.2 27.7 L14.4 25.9 L11 18.8 L18.8 18.6 Z" fill="#fff" stroke="#05050f" stroke-width="1.1" stroke-linejoin="miter"/></svg>
</div>
</body></html>
